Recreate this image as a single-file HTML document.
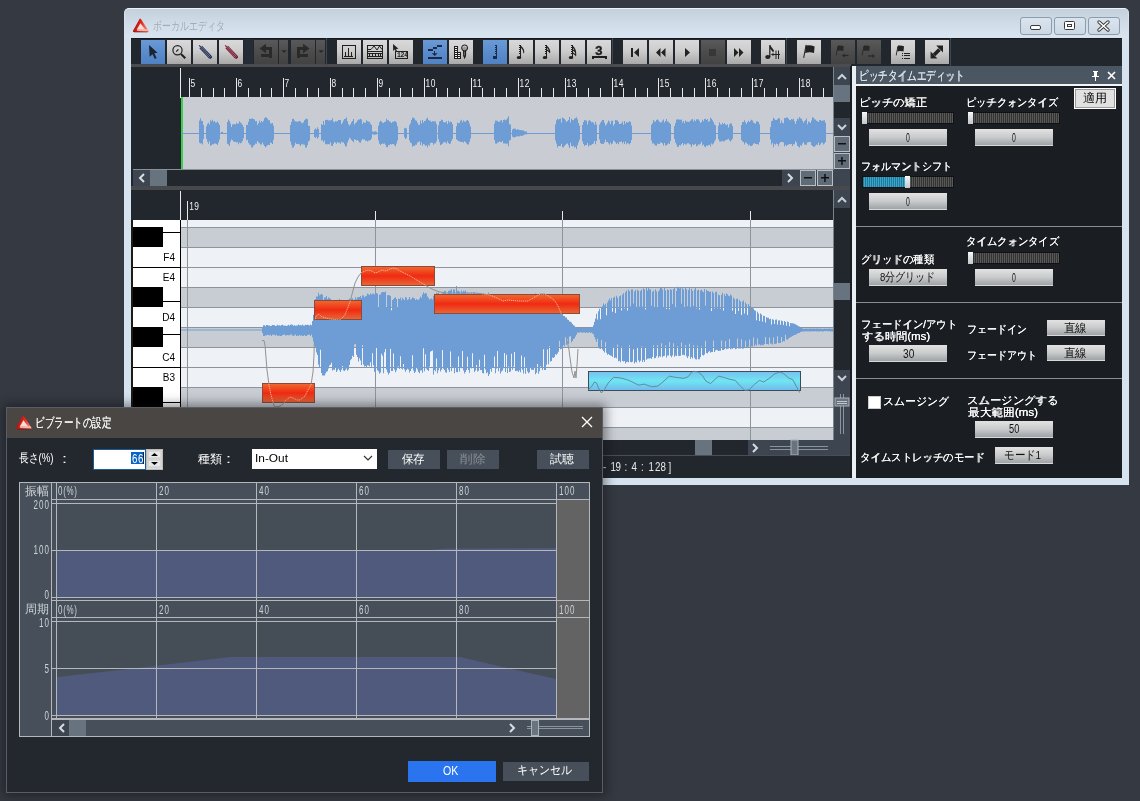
<!DOCTYPE html><html><head><meta charset="utf-8"><style>
html,body{margin:0;padding:0}
body{width:1140px;height:801px;overflow:hidden;background:#353a42;position:relative;font-family:"Liberation Sans",sans-serif}
.a{position:absolute;box-sizing:border-box}
.t{white-space:nowrap;line-height:1}
.sh{text-shadow:0.25px 0 0 currentColor}
.gb{background:linear-gradient(#d9d9d9,#cdcdcd 45%,#a9a9a9)}
.bb{background:linear-gradient(#6a9ad6,#5b8ccc 50%,#4f82c4)}
.db{background:linear-gradient(#59595a,#4d4c4c 50%,#434242)}
.pbtn{background:linear-gradient(#e2e2e2,#c9cbcc 50%,#9fa3a6);border-bottom:1px solid #d8d8d8}
.sld{background:repeating-linear-gradient(90deg,#333 0 1px,#585858 1px 2px);border:1px solid #111}
.dbtn{background:#47505a}
</style></head><body><div style="position:absolute;left:0;top:0;width:1140px;height:801px;will-change:transform"><div class="a " style="left:124px;top:8px;width:1005px;height:477px;background:#d6e2ee;border-radius:5px 5px 0 0;border-top:1px solid #eef3f8"></div>
<div class="a " style="left:125px;top:9px;width:1003px;height:29px;background:linear-gradient(#c4d0dc,#d2dee9 60%,#d8e4ef);border-radius:4px 4px 0 0"></div>
<div class="a t" style="left:153.00px;top:20.00px;font-size:12px;color:#a3abb3;font-family:'Liberation Sans',sans-serif;transform-origin:0 0;transform:scaleX(0.7447)">ボーカルエディタ</div>
<svg class="a" style="left:133px;top:18px" width="19" height="17" viewBox="0 0 19 17"><defs><linearGradient id="lga" x1="0" y1="0" x2="1" y2="0.3"><stop offset="0" stop-color="#8a0c10"/><stop offset="0.55" stop-color="#e02418"/><stop offset="1" stop-color="#f07060"/></linearGradient></defs><path d="M7.2 1.4 L14.8 13.2 L0.6 13.2 Z" fill="url(#lga)" stroke="url(#lga)" stroke-width="1.6" stroke-linejoin="round"/><path d="M7.4 5.2 L12.2 11.4 L3.8 11.4 Z" fill="#f6dcd4"/><path d="M3.6 11.2 L14.6 11.2 L15.2 13 L4.4 13 Z" fill="#f4c8bc" opacity="0.85"/><path d="M1 14 L14.5 14" stroke="#6a0c0c" stroke-width="1" opacity="0.55"/></svg>
<div class="a " style="left:1020px;top:17px;width:32px;height:18px;border:1px solid #8d9cab;border-radius:3px;background:linear-gradient(#dae4ee,#cbd8e4)"></div>
<div class="a " style="left:1054px;top:17px;width:32px;height:18px;border:1px solid #8d9cab;border-radius:3px;background:linear-gradient(#dae4ee,#cbd8e4)"></div>
<div class="a " style="left:1088px;top:17px;width:32px;height:18px;border:1px solid #8d9cab;border-radius:3px;background:linear-gradient(#dae4ee,#cbd8e4)"></div>
<svg class="a" style="left:0;top:0" width="1140" height="40"><rect x="1030.5" y="25.5" width="10" height="4" rx="1.5" fill="#fff" stroke="#3a3a3a" stroke-width="1"/><rect x="1064.5" y="21.5" width="10" height="8" rx="1" fill="#fff" stroke="#3a3a3a" stroke-width="1"/><rect x="1067.5" y="24.5" width="4" height="2" fill="#fff" stroke="#3a3a3a" stroke-width="1"/><path d="M1099 22 L1108 30 M1108 22 L1099 30" stroke="#3a3a3a" stroke-width="3.4" stroke-linecap="round"/><path d="M1099 22 L1108 30 M1108 22 L1099 30" stroke="#fff" stroke-width="1.5" stroke-linecap="round"/></svg>
<div class="a " style="left:131px;top:38px;width:991px;height:28px;background:#22262d;border-top:1px solid #15181c"></div>
<div class="a " style="left:131px;top:64px;width:720px;height:3px;background:#4a4c50"></div>
<div class="a bb" style="left:141px;top:40px;width:24px;height:24px;"></div>
<div class="a gb" style="left:167px;top:40px;width:24px;height:24px;"></div>
<div class="a gb" style="left:193px;top:40px;width:24px;height:24px;"></div>
<div class="a gb" style="left:219px;top:40px;width:24px;height:24px;"></div>
<div class="a db" style="left:254px;top:40px;width:24px;height:24px;"></div>
<div class="a db" style="left:279px;top:40px;width:9px;height:24px;"></div>
<div class="a db" style="left:291px;top:40px;width:24px;height:24px;"></div>
<div class="a db" style="left:316px;top:40px;width:9px;height:24px;"></div>
<div class="a gb" style="left:337px;top:40px;width:24px;height:24px;"></div>
<div class="a gb" style="left:363px;top:40px;width:24px;height:24px;"></div>
<div class="a gb" style="left:389px;top:40px;width:24px;height:24px;"></div>
<div class="a bb" style="left:423px;top:40px;width:24px;height:24px;"></div>
<div class="a gb" style="left:449px;top:40px;width:24px;height:24px;"></div>
<div class="a bb" style="left:483px;top:40px;width:24px;height:24px;"></div>
<div class="a gb" style="left:509px;top:40px;width:24px;height:24px;"></div>
<div class="a gb" style="left:535px;top:40px;width:24px;height:24px;"></div>
<div class="a gb" style="left:561px;top:40px;width:24px;height:24px;"></div>
<div class="a gb" style="left:587px;top:40px;width:24px;height:24px;"></div>
<div class="a gb" style="left:623px;top:40px;width:24px;height:24px;"></div>
<div class="a gb" style="left:649px;top:40px;width:24px;height:24px;"></div>
<div class="a gb" style="left:675px;top:40px;width:24px;height:24px;"></div>
<div class="a db" style="left:701px;top:40px;width:24px;height:24px;"></div>
<div class="a gb" style="left:727px;top:40px;width:24px;height:24px;"></div>
<div class="a gb" style="left:761px;top:40px;width:24px;height:24px;"></div>
<div class="a gb" style="left:797px;top:40px;width:24px;height:24px;"></div>
<div class="a db" style="left:831px;top:40px;width:24px;height:24px;"></div>
<div class="a db" style="left:857px;top:40px;width:24px;height:24px;"></div>
<div class="a gb" style="left:891px;top:40px;width:24px;height:24px;"></div>
<div class="a gb" style="left:925px;top:40px;width:24px;height:24px;"></div>
<div class="a " style="left:244px;top:39px;width:9px;height:25px;background:#252c36"></div>
<div class="a " style="left:326px;top:38px;width:1px;height:28px;background:#3e4650"></div>
<div class="a " style="left:612px;top:38px;width:1px;height:28px;background:#3e4650"></div>
<div class="a " style="left:786px;top:38px;width:1px;height:28px;background:#3e4650"></div>
<div class="a " style="left:950px;top:38px;width:1px;height:28px;background:#3e4650"></div>

<svg class="a" style="left:0;top:0" width="1140" height="70">
<path d="M149 45 L157.5 52.8 L154.3 53.2 L156.6 58 L154.8 58.9 L152.6 54.2 L149.6 56.8 Z" fill="#1b2431"/>
<circle cx="177.5" cy="50.3" r="4.6" fill="none" stroke="#202020" stroke-width="1.2"/>
<path d="M176.2 51.6 L178.4 49.4" stroke="#202020" stroke-width="1.3"/>
<path d="M181 54 L185.3 58.3" stroke="#202020" stroke-width="2"/>
<path d="M199.76 47.80 L209.66 58.50" stroke="#1f2d55" stroke-width="1.05"/><path d="M199.20 45.40 L210.60 57.60" stroke="#1f2d55" stroke-width="1.05"/><path d="M201.64 46.00 L211.54 56.70" stroke="#1f2d55" stroke-width="1.05"/><path d="M209.80 58.40 L211.80 56.60" stroke="#1f2d55" stroke-width="1.6"/>

<path d="M225.76 47.80 L235.66 58.50" stroke="#7a1430" stroke-width="1.05"/><path d="M225.20 45.40 L236.60 57.60" stroke="#7a1430" stroke-width="1.05"/><path d="M227.64 46.00 L237.54 56.70" stroke="#7a1430" stroke-width="1.05"/><path d="M235.80 58.40 L237.80 56.60" stroke="#7a1430" stroke-width="1.6"/>

<g fill="#2a2a2a" shape-rendering="crispEdges">
<rect x="265" y="47" width="7" height="3"/><rect x="269" y="47" width="3" height="11"/><rect x="261" y="54" width="11" height="3"/>
<rect x="297" y="47" width="7" height="3"/><rect x="297" y="47" width="3" height="11"/><rect x="297" y="54" width="11" height="3"/>
</g>
<g fill="#2a2a2a">
<path d="M259.5 48.5 L266 43.8 L266 53.2 Z"/>
<path d="M309.5 48.5 L303 43.8 L303 53.2 Z"/>
<path d="M281.3 50.3 L287 50.3 L284.1 53 Z"/>
<path d="M318.3 50.3 L324 50.3 L321.1 53 Z"/>
</g>
<g fill="#1e1e1e" shape-rendering="crispEdges">
<rect x="342" y="45" width="14" height="1"/><rect x="342" y="58" width="14" height="1"/><rect x="342" y="45" width="1" height="14"/><rect x="355" y="45" width="1" height="14"/>
<rect x="344" y="56" width="9" height="1"/><rect x="345" y="52" width="1" height="4"/><rect x="348" y="48" width="1" height="8"/><rect x="351" y="52" width="1" height="4"/>
<rect x="367" y="45" width="16" height="1"/><rect x="367" y="58" width="16" height="1"/><rect x="367" y="45" width="1" height="14"/><rect x="382" y="45" width="1" height="14"/>
<rect x="367" y="51" width="16" height="1"/>
<rect x="368" y="53" width="14" height="1"/><rect x="368" y="56" width="14" height="1"/>
<rect x="369" y="53" width="1" height="4"/><rect x="372" y="53" width="1" height="4"/><rect x="375" y="53" width="1" height="4"/><rect x="378" y="53" width="1" height="4"/><rect x="380" y="53" width="1" height="4"/>
<rect x="395" y="51" width="13" height="1"/><rect x="395" y="58" width="13" height="1"/><rect x="395" y="51" width="1" height="8"/><rect x="407" y="51" width="1" height="8"/>
</g>
<path d="M368 49.5 L371 49.5 L374 46 L377 50 L379.5 46 L382 49.5" fill="none" stroke="#1e1e1e" stroke-width="1"/>
<path d="M393 44 L398.5 48.8 L396 49 L397 51 L395.8 51.5 L394.8 49.5 L393.2 51 Z" fill="#222"/>
<text x="397" y="57.3" font-size="6.5" font-weight="bold" font-family="Liberation Mono" fill="#1e1e1e" letter-spacing="-0.3">124</text>
<g fill="#1a2a48" shape-rendering="crispEdges">
<rect x="428" y="49" width="5" height="2"/><rect x="433" y="47" width="4" height="2"/><rect x="437" y="45" width="5" height="2"/>
<rect x="434" y="51" width="1" height="3"/><rect x="428" y="57" width="14" height="2"/>
</g>
<path d="M431.8 53.2 L437.6 53.2 L434.7 56 Z" fill="#1a2a48"/>
<g fill="#1e1e1e" shape-rendering="crispEdges"><rect x="454" y="46" width="1" height="13"/><rect x="457" y="46" width="1" height="13"/><rect x="454" y="46" width="4" height="1"/><rect x="454" y="48" width="4" height="1"/><rect x="454" y="50" width="4" height="1"/><rect x="454" y="52" width="4" height="1"/><rect x="454" y="54" width="4" height="1"/><rect x="454" y="56" width="4" height="1"/><rect x="454" y="58" width="4" height="1"/><rect x="460" y="52" width="1" height="7"/><rect x="457" y="52" width="4" height="1"/><rect x="457" y="54" width="4" height="1"/><rect x="457" y="56" width="4" height="1"/><rect x="457" y="58" width="4" height="1"/><rect x="454" y="58" width="7" height="1"/></g><g fill="#f4f4f4" shape-rendering="crispEdges"><rect x="455" y="47" width="2" height="1"/><rect x="455" y="49" width="2" height="1"/><rect x="455" y="51" width="2" height="1"/><rect x="455" y="53" width="2" height="1"/><rect x="455" y="55" width="2" height="1"/><rect x="455" y="57" width="2" height="1"/><rect x="458" y="53" width="2" height="1"/><rect x="458" y="55" width="2" height="1"/><rect x="458" y="57" width="2" height="1"/></g><circle cx="464.6" cy="47.9" r="3" fill="#9a9a9a" stroke="#1e1e1e" stroke-width="1"/><path d="M462.6 47 Q464.6 45.6 466.6 47" stroke="#d8d8d8" stroke-width="0.8" fill="none"/><path d="M463 50.8 L466.2 50.8 L466 56 L464.6 59.2 L463.2 56 Z" fill="#1e1e1e"/><rect x="464.2" y="51.5" width="0.8" height="4" fill="#777"/>
<g fill="#1a2a48" shape-rendering="crispEdges">
<rect x="495" y="45" width="1" height="1"/><rect x="495" y="47" width="1" height="1"/><rect x="495" y="49" width="1" height="1"/><rect x="495" y="51" width="1" height="1"/><rect x="495" y="53" width="1" height="1"/>
<rect x="496" y="45" width="1" height="13"/>
<rect x="493" y="56" width="4" height="3"/>
</g>
<g fill="#1e1e1e" shape-rendering="crispEdges">
<rect x="519" y="45" width="1" height="1"/><rect x="519" y="47" width="1" height="1"/><rect x="519" y="49" width="1" height="1"/><rect x="519" y="51" width="1" height="1"/><rect x="519" y="53" width="1" height="1"/><rect x="520" y="45" width="1" height="13"/>
<rect x="545" y="45" width="1" height="1"/><rect x="545" y="47" width="1" height="1"/><rect x="545" y="49" width="1" height="1"/><rect x="545" y="51" width="1" height="1"/><rect x="545" y="53" width="1" height="1"/><rect x="546" y="45" width="1" height="13"/>
<rect x="571" y="45" width="1" height="1"/><rect x="571" y="47" width="1" height="1"/><rect x="571" y="49" width="1" height="1"/><rect x="571" y="51" width="1" height="1"/><rect x="571" y="53" width="1" height="1"/><rect x="572" y="45" width="1" height="13"/>
</g>
<g fill="#1e1e1e">
<ellipse cx="519" cy="57.5" rx="2.3" ry="1.6"/><path d="M520.5 45.5 Q524.5 48.5 524.3 52.5 L523.3 53.5 Q523.5 49.5 520.5 47.5 Z"/>
<ellipse cx="545" cy="57.5" rx="2.3" ry="1.6"/><path d="M546.5 45.5 Q550.5 48.5 550.3 52.5 L549.3 53.5 Q549.5 49.5 546.5 47.5 Z M546.5 49 L550 51.5 L549.5 52.5 L546.5 50.5 Z"/>
<ellipse cx="571" cy="57.5" rx="2.3" ry="1.6"/><path d="M572.5 45.5 Q576.5 48.5 576.3 55.5 L575.3 56.5 Q575.5 50 572.5 47.5 Z M572.5 49 L576 51.5 L575.5 52.5 L572.5 50.5 Z M572.5 52 L576 54.5 L575.5 55.5 L572.5 53.5 Z"/>
</g>
<text x="598.8" y="54.6" text-anchor="middle" font-size="13" font-weight="bold" font-family="Liberation Sans" fill="#1e1e1e" stroke="#1e1e1e" stroke-width="0.4">3</text>
<g fill="#1e1e1e" shape-rendering="crispEdges"><rect x="592" y="56" width="15" height="2"/><rect x="592" y="56" width="2" height="3"/><rect x="605" y="56" width="2" height="3"/></g>
<g fill="#222">
<rect x="631" y="48" width="2" height="9"/><path d="M639 48 L634 52.5 L639 57 Z"/>
<path d="M660.5 48 L656 52.5 L660.5 57 Z M665.5 48 L661 52.5 L665.5 57 Z"/>
<path d="M685 48 L690 52.5 L685 57 Z"/>
<rect x="709" y="49" width="7" height="7" fill="#383636"/>
<path d="M734 48 L738.5 52.5 L734 57 Z M739 48 L743.5 52.5 L739 57 Z"/>
<ellipse cx="767.8" cy="57" rx="2.6" ry="1.9"/><rect x="769.2" y="45" width="1.2" height="12"/><path d="M770 45 L774 50.5 L773.2 52.5 L770 48.5 Z"/>
</g>
<path d="M771.5 54.5 L780 54.5 M776 50.5 L776 59 M778.5 50.5 L778.5 59" stroke="#222" stroke-width="1"/>
<path d="M771.2 54.5 L773.5 52.8 L773.5 56.2 Z" fill="#222"/>
<path d="M805.6 44.8 L806.6 45 L804.2 58 L803.2 57.8 Z" fill="#222"/>
<path d="M806 45.6 Q810 44.5 814.6 46.5 L814 53 Q810 51.3 805 53 Z" fill="#222"/>
<g fill="#2a2726">
<path d="M837.4 46.2 L838.2 46.4 L836.6 55.5 L835.8 55.3 Z"/><path d="M838 45.6 Q841 45 843.8 46.2 L843.2 51 Q840.5 50 837.2 51 Z"/>
<path d="M842.5 55.5 L848.5 55.5" stroke="#2a2726" stroke-width="1.3"/><path d="M842 55.5 L844.5 53.5 L844.5 57.5 Z"/>
<path d="M863.4 46.2 L864.2 46.4 L862.6 55.5 L861.8 55.3 Z"/><path d="M864 45.6 Q867 45 869.8 46.2 L869.2 51 Q866.5 50 863.2 51 Z"/>
<path d="M868 56 L874 56" stroke="#2a2726" stroke-width="1.3"/><path d="M875 56 L872.5 54 L872.5 58 Z"/>
</g>
<g fill="#222">
<path d="M897.4 46.2 L898.2 46.4 L896.6 55.5 L895.8 55.3 Z"/><path d="M898 45.6 Q901 45 904 46.2 L903.5 51.5 Q900.5 50.5 897.2 51.5 Z"/>
</g>
<g fill="#222" shape-rendering="crispEdges">
<rect x="902" y="53" width="1" height="1"/><rect x="904" y="53" width="6" height="1"/>
<rect x="902" y="55" width="1" height="1"/><rect x="904" y="55" width="6" height="1"/>
<rect x="902" y="58" width="1" height="1"/><rect x="904" y="58" width="6" height="1"/>
</g>
<path d="M934 55 L939.5 49.5" stroke="#222" stroke-width="3.8"/>
<path d="M943 45.6 L943 52.4 L936.2 45.6 Z M930.6 58.4 L930.6 51.6 L937.4 58.4 Z" fill="#222"/>
</svg>

<div class="a " style="left:131px;top:67px;width:720px;height:119px;background:#22262d"></div>
<svg class="a" style="left:0;top:0" width="860" height="100"><rect x="189" y="78" width="1" height="19" fill="#e8e8e8"/><text x="238.25" y="87.2" font-size="10.5" fill="#f0f0f0" font-family="Liberation Sans" transform="scale(0.8,1)" letter-spacing="0.6">5</text><rect x="201" y="88" width="1" height="9" fill="#e8e8e8"/><rect x="213" y="88" width="1" height="9" fill="#e8e8e8"/><rect x="224" y="88" width="1" height="9" fill="#e8e8e8"/><rect x="236" y="78" width="1" height="19" fill="#e8e8e8"/><text x="297.00" y="87.2" font-size="10.5" fill="#f0f0f0" font-family="Liberation Sans" transform="scale(0.8,1)" letter-spacing="0.6">6</text><rect x="248" y="88" width="1" height="9" fill="#e8e8e8"/><rect x="260" y="88" width="1" height="9" fill="#e8e8e8"/><rect x="271" y="88" width="1" height="9" fill="#e8e8e8"/><rect x="283" y="78" width="1" height="19" fill="#e8e8e8"/><text x="355.75" y="87.2" font-size="10.5" fill="#f0f0f0" font-family="Liberation Sans" transform="scale(0.8,1)" letter-spacing="0.6">7</text><rect x="295" y="88" width="1" height="9" fill="#e8e8e8"/><rect x="307" y="88" width="1" height="9" fill="#e8e8e8"/><rect x="318" y="88" width="1" height="9" fill="#e8e8e8"/><rect x="330" y="78" width="1" height="19" fill="#e8e8e8"/><text x="414.50" y="87.2" font-size="10.5" fill="#f0f0f0" font-family="Liberation Sans" transform="scale(0.8,1)" letter-spacing="0.6">8</text><rect x="342" y="88" width="1" height="9" fill="#e8e8e8"/><rect x="353" y="88" width="1" height="9" fill="#e8e8e8"/><rect x="365" y="88" width="1" height="9" fill="#e8e8e8"/><rect x="377" y="78" width="1" height="19" fill="#e8e8e8"/><text x="473.25" y="87.2" font-size="10.5" fill="#f0f0f0" font-family="Liberation Sans" transform="scale(0.8,1)" letter-spacing="0.6">9</text><rect x="389" y="88" width="1" height="9" fill="#e8e8e8"/><rect x="400" y="88" width="1" height="9" fill="#e8e8e8"/><rect x="412" y="88" width="1" height="9" fill="#e8e8e8"/><rect x="424" y="78" width="1" height="19" fill="#e8e8e8"/><text x="532.00" y="87.2" font-size="10.5" fill="#f0f0f0" font-family="Liberation Sans" transform="scale(0.8,1)" letter-spacing="0.6">10</text><rect x="436" y="88" width="1" height="9" fill="#e8e8e8"/><rect x="447" y="88" width="1" height="9" fill="#e8e8e8"/><rect x="459" y="88" width="1" height="9" fill="#e8e8e8"/><rect x="471" y="78" width="1" height="19" fill="#e8e8e8"/><text x="590.75" y="87.2" font-size="10.5" fill="#f0f0f0" font-family="Liberation Sans" transform="scale(0.8,1)" letter-spacing="0.6">11</text><rect x="482" y="88" width="1" height="9" fill="#e8e8e8"/><rect x="494" y="88" width="1" height="9" fill="#e8e8e8"/><rect x="506" y="88" width="1" height="9" fill="#e8e8e8"/><rect x="518" y="78" width="1" height="19" fill="#e8e8e8"/><text x="649.50" y="87.2" font-size="10.5" fill="#f0f0f0" font-family="Liberation Sans" transform="scale(0.8,1)" letter-spacing="0.6">12</text><rect x="529" y="88" width="1" height="9" fill="#e8e8e8"/><rect x="541" y="88" width="1" height="9" fill="#e8e8e8"/><rect x="553" y="88" width="1" height="9" fill="#e8e8e8"/><rect x="565" y="78" width="1" height="19" fill="#e8e8e8"/><text x="708.25" y="87.2" font-size="10.5" fill="#f0f0f0" font-family="Liberation Sans" transform="scale(0.8,1)" letter-spacing="0.6">13</text><rect x="576" y="88" width="1" height="9" fill="#e8e8e8"/><rect x="588" y="88" width="1" height="9" fill="#e8e8e8"/><rect x="600" y="88" width="1" height="9" fill="#e8e8e8"/><rect x="612" y="78" width="1" height="19" fill="#e8e8e8"/><text x="767.00" y="87.2" font-size="10.5" fill="#f0f0f0" font-family="Liberation Sans" transform="scale(0.8,1)" letter-spacing="0.6">14</text><rect x="623" y="88" width="1" height="9" fill="#e8e8e8"/><rect x="635" y="88" width="1" height="9" fill="#e8e8e8"/><rect x="647" y="88" width="1" height="9" fill="#e8e8e8"/><rect x="658" y="78" width="1" height="19" fill="#e8e8e8"/><text x="824.50" y="87.2" font-size="10.5" fill="#f0f0f0" font-family="Liberation Sans" transform="scale(0.8,1)" letter-spacing="0.6">15</text><rect x="670" y="88" width="1" height="9" fill="#e8e8e8"/><rect x="682" y="88" width="1" height="9" fill="#e8e8e8"/><rect x="694" y="88" width="1" height="9" fill="#e8e8e8"/><rect x="705" y="78" width="1" height="19" fill="#e8e8e8"/><text x="883.25" y="87.2" font-size="10.5" fill="#f0f0f0" font-family="Liberation Sans" transform="scale(0.8,1)" letter-spacing="0.6">16</text><rect x="717" y="88" width="1" height="9" fill="#e8e8e8"/><rect x="729" y="88" width="1" height="9" fill="#e8e8e8"/><rect x="741" y="88" width="1" height="9" fill="#e8e8e8"/><rect x="752" y="78" width="1" height="19" fill="#e8e8e8"/><text x="942.00" y="87.2" font-size="10.5" fill="#f0f0f0" font-family="Liberation Sans" transform="scale(0.8,1)" letter-spacing="0.6">17</text><rect x="764" y="88" width="1" height="9" fill="#e8e8e8"/><rect x="776" y="88" width="1" height="9" fill="#e8e8e8"/><rect x="787" y="88" width="1" height="9" fill="#e8e8e8"/><rect x="799" y="78" width="1" height="19" fill="#e8e8e8"/><text x="1000.75" y="87.2" font-size="10.5" fill="#f0f0f0" font-family="Liberation Sans" transform="scale(0.8,1)" letter-spacing="0.6">18</text><rect x="811" y="88" width="1" height="9" fill="#e8e8e8"/><rect x="823" y="88" width="1" height="9" fill="#e8e8e8"/><rect x="180" y="68" width="1" height="30" fill="#e8e8e8"/></svg>
<div class="a " style="left:181px;top:97px;width:652px;height:73px;background:#c9cdd3"></div>
<div class="a " style="left:133px;top:169px;width:700px;height:1px;background:#8a9098"></div>
<div class="a " style="left:181px;top:97px;width:2px;height:72px;background:#3ad04a"></div>
<div class="a " style="left:833px;top:67px;width:1px;height:103px;background:#7a828a"></div>
<div class="a " style="left:834px;top:67px;width:16px;height:18px;background:#3d4650"></div>
<div class="a " style="left:834px;top:85px;width:16px;height:17px;background:#67737f"></div>
<div class="a " style="left:834px;top:102px;width:16px;height:16px;background:#22262d"></div>
<div class="a " style="left:834px;top:118px;width:16px;height:17px;background:#3d4650"></div>
<div class="a " style="left:834px;top:135px;width:16px;height:35px;background:#3d4650"></div>
<div class="a " style="left:834px;top:136px;width:16px;height:16px;background:#5f6c78;border:1px solid #b8bec4"></div>
<div class="a " style="left:834px;top:153px;width:16px;height:16px;background:#5f6c78;border:1px solid #b8bec4"></div>
<div class="a " style="left:133px;top:170px;width:700px;height:16px;background:#22262d"></div>
<div class="a " style="left:133px;top:170px;width:17px;height:16px;background:#3d4650"></div>
<div class="a " style="left:150px;top:170px;width:17px;height:16px;background:#67737f"></div>
<div class="a " style="left:782px;top:170px;width:68px;height:16px;background:#3d4650"></div>
<div class="a " style="left:800px;top:170px;width:16px;height:16px;background:#5f6c78;border:1px solid #b8bec4"></div>
<div class="a " style="left:817px;top:170px;width:16px;height:16px;background:#5f6c78;border:1px solid #b8bec4"></div>
<svg class="a" style="left:0;top:0" width="860" height="200"><path d="M838 79 L842 75 L846 79" fill="none" stroke="#c8d0d8" stroke-width="2"/><path d="M838 125 L842 129 L846 125" fill="none" stroke="#c8d0d8" stroke-width="2"/><rect x="838" y="143" width="8" height="1.5" fill="#111"/><rect x="838" y="160" width="8" height="1.5" fill="#111"/><rect x="841.2" y="157" width="1.5" height="8" fill="#111"/><rect x="804" y="177" width="8" height="1.5" fill="#111"/><rect x="821" y="177" width="8" height="1.5" fill="#111"/><rect x="824.2" y="174" width="1.5" height="8" fill="#111"/><path d="M144 174 L140 178 L144 182" fill="none" stroke="#d8dde2" stroke-width="2"/><path d="M788 174 L792 178 L788 182" fill="none" stroke="#d8dde2" stroke-width="2"/></svg>
<div class="a " style="left:131px;top:186px;width:720px;height:4px;background:#47494c"></div>
<svg class="a" style="left:0;top:0" width="860" height="200"><path fill="#6e9dd6" d="M181 133h652v1h-652zM199 120.6h1V142.8h-1zM200 118.3h1V143.4h-1zM201 120.7h1V143.2h-1zM202 120.9h1V144.5h-1zM203 125.1h1V139.1h-1zM206 126.3h1V138.8h-1zM207 123.8h1V141.8h-1zM208 122.8h1V143.8h-1zM209 124.5h1V141.3h-1zM210 120.2h1V145.9h-1zM211 121.3h1V145.0h-1zM212 119.8h1V144.2h-1zM213 121.8h1V144.3h-1zM214 120.9h1V143.5h-1zM215 122.5h1V143.6h-1zM216 122.4h1V144.1h-1zM217 121.6h1V145.1h-1zM218 123.1h1V142.6h-1zM219 125.0h1V139.5h-1zM221 131.9h1V133.5h-1zM222 131.8h1V133.6h-1zM227 122.0h1V143.8h-1zM228 119.5h1V144.4h-1zM229 121.1h1V145.9h-1zM230 123.4h1V141.8h-1zM231 127.1h1V139.6h-1zM232 124.4h1V140.3h-1zM233 124.0h1V141.4h-1zM234 124.2h1V142.0h-1zM235 124.5h1V141.8h-1zM236 122.7h1V142.8h-1zM237 123.8h1V142.1h-1zM238 123.4h1V144.3h-1zM239 121.3h1V142.6h-1zM240 122.6h1V143.3h-1zM241 123.5h1V142.8h-1zM242 124.7h1V140.9h-1zM243 126.9h1V138.3h-1zM246 124.8h1V140.2h-1zM247 125.0h1V139.8h-1zM248 121.7h1V143.0h-1zM249 118.7h1V144.6h-1zM250 119.1h1V144.8h-1zM251 118.6h1V147.5h-1zM252 118.5h1V147.5h-1zM253 118.9h1V145.5h-1zM254 119.6h1V145.3h-1zM255 121.2h1V143.6h-1zM256 121.1h1V143.7h-1zM257 124.7h1V141.1h-1zM258 123.3h1V142.2h-1zM259 120.6h1V143.2h-1zM260 122.6h1V144.4h-1zM261 121.0h1V144.5h-1zM262 122.2h1V142.4h-1zM263 120.8h1V144.6h-1zM264 118.3h1V146.0h-1zM265 117.2h1V147.4h-1zM266 117.6h1V146.2h-1zM267 118.8h1V145.3h-1zM268 120.2h1V144.7h-1zM269 120.3h1V144.9h-1zM270 123.3h1V142.6h-1zM271 123.5h1V142.9h-1zM272 123.1h1V144.0h-1zM273 125.7h1V139.8h-1zM290 124.9h1V141.4h-1zM291 122.0h1V144.8h-1zM292 119.1h1V147.7h-1zM293 118.8h1V147.4h-1zM294 120.6h1V145.5h-1zM295 121.5h1V142.8h-1zM296 121.6h1V144.0h-1zM297 121.7h1V144.0h-1zM298 121.3h1V143.7h-1zM299 121.1h1V144.5h-1zM300 121.4h1V146.1h-1zM301 122.7h1V144.3h-1zM302 123.2h1V144.3h-1zM303 122.2h1V144.6h-1zM304 120.2h1V144.8h-1zM305 119.2h1V147.5h-1zM306 118.6h1V147.5h-1zM307 119.2h1V145.1h-1zM308 125.7h1V141.6h-1zM309 126.0h1V140.4h-1zM314 129.4h1V136.9h-1zM315 128.4h1V138.1h-1zM316 129.4h1V136.7h-1zM317 127.3h1V138.8h-1zM318 129.1h1V137.3h-1zM321 123.9h1V140.4h-1zM322 125.1h1V140.2h-1zM323 120.9h1V142.3h-1zM324 124.7h1V140.6h-1zM325 119.9h1V144.3h-1zM326 120.0h1V144.2h-1zM327 119.8h1V144.3h-1zM328 120.4h1V144.0h-1zM329 120.3h1V144.5h-1zM330 120.6h1V142.3h-1zM331 120.1h1V145.8h-1zM332 118.2h1V145.9h-1zM333 121.6h1V143.7h-1zM334 122.3h1V142.1h-1zM335 120.9h1V142.8h-1zM336 121.5h1V143.8h-1zM337 120.9h1V142.0h-1zM338 120.0h1V142.8h-1zM339 120.1h1V142.8h-1zM340 120.1h1V143.8h-1zM341 124.3h1V141.8h-1zM342 122.7h1V142.5h-1zM343 120.4h1V142.3h-1zM344 119.1h1V144.3h-1zM345 118.7h1V146.4h-1zM346 117.4h1V146.2h-1zM347 121.3h1V142.7h-1zM348 124.3h1V140.3h-1zM349 125.5h1V137.8h-1zM350 124.2h1V138.7h-1zM351 122.3h1V140.0h-1zM352 121.1h1V141.1h-1zM353 118.9h1V142.2h-1zM354 124.6h1V139.2h-1zM355 123.0h1V139.7h-1zM356 122.2h1V140.4h-1zM357 120.6h1V140.0h-1zM358 119.6h1V141.0h-1zM359 119.6h1V142.4h-1zM360 118.7h1V142.8h-1zM361 119.4h1V140.6h-1zM362 124.1h1V138.9h-1zM363 122.0h1V139.4h-1zM364 122.8h1V139.5h-1zM365 122.7h1V140.8h-1zM366 120.3h1V140.8h-1zM367 121.3h1V141.5h-1zM368 121.8h1V140.5h-1zM369 121.7h1V140.8h-1zM370 123.7h1V140.0h-1zM371 125.0h1V138.4h-1zM372 131.5h1V134.3h-1zM373 131.8h1V134.5h-1zM374 131.4h1V134.9h-1zM375 131.3h1V134.6h-1zM376 131.7h1V134.2h-1zM378 125.7h1V140.6h-1zM379 122.2h1V143.8h-1zM380 120.7h1V145.1h-1zM381 121.4h1V143.9h-1zM382 122.5h1V143.6h-1zM383 123.0h1V143.8h-1zM384 122.0h1V143.5h-1zM385 121.7h1V144.7h-1zM386 118.8h1V146.9h-1zM387 120.3h1V147.3h-1zM388 120.3h1V145.1h-1zM389 121.5h1V145.3h-1zM390 121.7h1V144.1h-1zM391 122.9h1V144.4h-1zM392 121.8h1V144.0h-1zM393 122.0h1V144.0h-1zM394 120.9h1V145.3h-1zM395 121.2h1V146.2h-1zM396 122.5h1V143.5h-1zM397 126.3h1V140.4h-1zM404 128.3h1V137.3h-1zM405 127.8h1V139.1h-1zM406 128.4h1V138.2h-1zM409 125.3h1V140.4h-1zM410 123.3h1V142.8h-1zM411 120.0h1V143.2h-1zM412 117.7h1V146.8h-1zM413 117.7h1V145.8h-1zM414 118.4h1V146.0h-1zM415 120.2h1V144.8h-1zM416 120.8h1V144.8h-1zM417 122.8h1V142.4h-1zM418 124.8h1V141.9h-1zM419 124.7h1V141.2h-1zM420 120.5h1V145.0h-1zM421 123.5h1V142.4h-1zM422 120.0h1V145.7h-1zM423 122.5h1V144.0h-1zM424 120.9h1V144.6h-1zM425 120.8h1V146.0h-1zM426 118.8h1V145.2h-1zM427 117.8h1V147.5h-1zM428 119.9h1V144.8h-1zM429 120.7h1V145.8h-1zM430 120.7h1V142.8h-1zM431 121.9h1V142.8h-1zM432 121.3h1V142.8h-1zM433 121.3h1V144.8h-1zM434 121.4h1V143.6h-1zM435 121.3h1V143.2h-1zM436 124.0h1V141.6h-1zM438 125.3h1V139.2h-1zM439 121.6h1V142.3h-1zM440 121.1h1V145.2h-1zM441 119.6h1V144.5h-1zM442 119.9h1V143.8h-1zM443 122.0h1V142.6h-1zM444 122.6h1V141.9h-1zM445 122.2h1V142.6h-1zM446 121.2h1V143.6h-1zM447 124.1h1V141.3h-1zM448 120.7h1V143.0h-1zM449 122.4h1V144.1h-1zM450 121.6h1V143.5h-1zM451 122.0h1V141.0h-1zM452 124.3h1V138.9h-1zM456 126.2h1V139.6h-1zM457 122.5h1V140.1h-1zM458 123.2h1V141.2h-1zM459 123.0h1V141.2h-1zM460 120.7h1V142.0h-1zM461 119.8h1V142.1h-1zM462 122.2h1V141.8h-1zM463 120.5h1V142.8h-1zM464 121.5h1V141.3h-1zM465 121.8h1V141.9h-1zM466 120.5h1V143.6h-1zM467 120.0h1V144.6h-1zM468 120.9h1V144.6h-1zM469 123.4h1V141.9h-1zM470 126.5h1V138.5h-1zM494 123.6h1V140.1h-1zM495 120.6h1V143.6h-1zM496 120.8h1V143.8h-1zM497 120.7h1V142.6h-1zM498 122.1h1V142.5h-1zM499 121.8h1V141.4h-1zM500 120.5h1V142.1h-1zM501 120.1h1V142.2h-1zM502 122.4h1V141.0h-1zM503 120.1h1V143.5h-1zM504 119.6h1V143.4h-1zM505 120.3h1V143.6h-1zM506 119.5h1V143.8h-1zM507 118.2h1V143.6h-1zM508 116.3h1V146.2h-1zM509 124.2h1V140.4h-1zM510 124.6h1V140.1h-1zM512 129.5h1V136.8h-1zM513 128.7h1V137.3h-1zM514 128.5h1V137.4h-1zM515 128.7h1V137.0h-1zM516 130.1h1V136.4h-1zM517 129.3h1V136.2h-1zM518 129.6h1V136.5h-1zM519 129.9h1V136.3h-1zM520 129.9h1V135.8h-1zM521 130.2h1V135.9h-1zM522 130.3h1V135.8h-1zM523 130.6h1V135.3h-1zM524 131.3h1V134.7h-1zM525 131.6h1V134.3h-1zM526 131.6h1V134.4h-1zM555 124.2h1V140.6h-1zM556 120.3h1V143.6h-1zM557 118.7h1V147.6h-1zM558 119.6h1V145.9h-1zM559 119.0h1V146.1h-1zM560 118.5h1V145.9h-1zM561 122.4h1V143.8h-1zM562 117.6h1V147.3h-1zM563 118.2h1V147.4h-1zM564 119.1h1V146.0h-1zM565 120.3h1V144.7h-1zM566 122.0h1V143.7h-1zM567 120.9h1V143.5h-1zM568 120.0h1V145.4h-1zM569 117.1h1V148.1h-1zM570 122.5h1V142.7h-1zM571 118.8h1V146.1h-1zM572 119.9h1V146.5h-1zM573 120.3h1V145.8h-1zM574 118.4h1V147.5h-1zM575 118.3h1V146.8h-1zM576 117.2h1V149.0h-1zM577 119.3h1V145.3h-1zM578 123.0h1V142.5h-1zM579 125.5h1V139.8h-1zM582 124.9h1V141.2h-1zM583 122.1h1V144.0h-1zM584 119.9h1V146.0h-1zM585 120.6h1V145.1h-1zM586 120.6h1V145.0h-1zM587 124.4h1V142.9h-1zM588 121.3h1V146.4h-1zM589 119.9h1V145.1h-1zM590 121.1h1V145.6h-1zM591 122.2h1V144.8h-1zM592 122.1h1V143.9h-1zM593 122.8h1V143.6h-1zM594 124.7h1V141.1h-1zM595 121.8h1V144.3h-1zM596 124.5h1V141.1h-1zM599 124.7h1V139.6h-1zM600 122.7h1V142.9h-1zM601 121.2h1V143.9h-1zM602 120.1h1V143.8h-1zM603 120.0h1V143.9h-1zM604 122.7h1V142.6h-1zM605 125.5h1V139.8h-1zM606 124.4h1V141.9h-1zM607 122.7h1V142.1h-1zM608 120.6h1V143.2h-1zM609 121.4h1V144.7h-1zM610 124.1h1V142.5h-1zM611 120.8h1V144.3h-1zM612 120.7h1V143.5h-1zM613 125.7h1V140.7h-1zM614 124.1h1V141.2h-1zM615 120.1h1V142.5h-1zM616 120.3h1V144.1h-1zM617 120.5h1V142.8h-1zM618 122.0h1V144.3h-1zM619 124.0h1V141.7h-1zM620 123.9h1V141.9h-1zM621 123.3h1V141.4h-1zM622 121.4h1V143.5h-1zM623 124.7h1V141.7h-1zM624 121.1h1V143.9h-1zM625 123.7h1V141.4h-1zM626 121.9h1V144.2h-1zM627 122.6h1V142.9h-1zM628 122.2h1V143.5h-1zM629 121.2h1V144.5h-1zM630 121.9h1V143.0h-1zM631 125.4h1V139.9h-1zM651 124.7h1V140.5h-1zM652 123.3h1V143.6h-1zM653 120.1h1V143.3h-1zM654 121.5h1V144.6h-1zM655 121.7h1V145.5h-1zM656 119.9h1V145.8h-1zM657 119.3h1V143.5h-1zM658 120.6h1V143.9h-1zM659 121.8h1V144.0h-1zM660 122.5h1V142.3h-1zM661 122.2h1V142.7h-1zM662 120.7h1V143.4h-1zM663 119.6h1V145.5h-1zM664 122.5h1V143.1h-1zM665 120.9h1V145.4h-1zM666 119.0h1V145.2h-1zM667 121.5h1V144.4h-1zM668 121.8h1V143.3h-1zM669 123.0h1V144.1h-1zM670 124.0h1V141.0h-1zM674 126.1h1V139.0h-1zM675 123.0h1V142.5h-1zM676 119.6h1V144.5h-1zM677 119.6h1V146.9h-1zM678 119.2h1V146.8h-1zM679 119.7h1V145.1h-1zM680 119.7h1V145.4h-1zM681 119.5h1V144.3h-1zM682 122.6h1V143.0h-1zM683 120.9h1V145.3h-1zM684 123.3h1V143.7h-1zM685 120.6h1V144.4h-1zM686 121.4h1V144.5h-1zM687 121.7h1V143.3h-1zM688 122.0h1V143.2h-1zM689 121.5h1V144.2h-1zM690 120.8h1V144.8h-1zM691 119.5h1V147.0h-1zM692 119.1h1V144.3h-1zM693 121.6h1V145.0h-1zM694 119.7h1V144.4h-1zM695 121.3h1V143.8h-1zM696 119.2h1V146.2h-1zM697 119.6h1V145.8h-1zM698 119.3h1V144.2h-1zM699 120.9h1V144.8h-1zM700 122.9h1V143.8h-1zM701 122.1h1V141.8h-1zM702 119.8h1V145.5h-1zM703 121.3h1V144.6h-1zM704 118.9h1V146.6h-1zM705 118.8h1V147.2h-1zM706 120.1h1V145.4h-1zM707 119.1h1V145.9h-1zM708 121.8h1V144.9h-1zM709 121.3h1V144.8h-1zM710 117.7h1V146.5h-1zM711 118.7h1V143.6h-1zM712 120.3h1V144.4h-1zM713 122.1h1V143.6h-1zM714 124.5h1V141.4h-1zM715 125.3h1V139.7h-1zM718 125.5h1V139.2h-1zM719 122.3h1V141.5h-1zM720 124.3h1V141.4h-1zM721 124.8h1V141.4h-1zM722 123.1h1V140.8h-1zM723 124.2h1V141.6h-1zM724 123.1h1V141.2h-1zM725 124.4h1V140.3h-1zM726 124.9h1V139.8h-1zM727 124.2h1V139.4h-1zM728 127.4h1V138.8h-1zM729 124.4h1V140.6h-1zM730 123.3h1V141.6h-1zM731 123.5h1V140.3h-1zM732 125.9h1V138.8h-1zM741 125.1h1V140.1h-1zM742 122.1h1V141.6h-1zM743 121.9h1V142.0h-1zM744 120.2h1V144.5h-1zM745 122.3h1V142.4h-1zM746 123.9h1V142.8h-1zM747 122.0h1V144.0h-1zM748 120.7h1V145.4h-1zM749 122.0h1V144.8h-1zM750 120.7h1V146.0h-1zM751 119.7h1V145.9h-1zM752 120.4h1V145.3h-1zM753 122.5h1V143.7h-1zM754 123.2h1V142.9h-1zM755 123.5h1V143.9h-1zM756 121.4h1V144.2h-1zM757 121.2h1V144.0h-1zM758 121.9h1V144.7h-1zM759 124.2h1V141.9h-1zM770 127.1h1V139.6h-1zM771 121.2h1V144.6h-1zM772 120.7h1V142.7h-1zM773 117.8h1V147.3h-1zM774 118.9h1V144.1h-1zM775 120.1h1V144.7h-1zM776 119.9h1V143.4h-1zM777 119.2h1V144.0h-1zM778 118.1h1V146.2h-1zM779 118.5h1V143.4h-1zM780 123.3h1V142.1h-1zM781 120.4h1V142.1h-1zM782 122.8h1V142.0h-1zM783 123.3h1V142.4h-1zM784 118.1h1V146.5h-1zM785 118.2h1V144.7h-1zM786 117.5h1V146.1h-1zM787 117.5h1V144.9h-1zM788 118.8h1V144.5h-1zM789 119.9h1V143.9h-1zM790 120.3h1V144.3h-1zM791 119.1h1V143.9h-1zM792 119.4h1V146.1h-1zM793 118.8h1V144.3h-1zM794 121.2h1V144.3h-1zM795 123.9h1V141.2h-1zM796 121.1h1V142.5h-1zM797 118.6h1V145.8h-1zM798 119.3h1V146.7h-1zM799 117.0h1V147.6h-1zM800 118.3h1V145.1h-1zM801 118.7h1V145.9h-1zM802 120.8h1V143.6h-1zM803 122.8h1V142.2h-1zM804 121.0h1V144.4h-1zM805 120.3h1V144.8h-1zM806 118.4h1V144.8h-1zM807 124.2h1V142.6h-1zM808 121.4h1V142.2h-1zM809 121.9h1V142.0h-1zM810 123.1h1V142.0h-1zM811 120.4h1V145.0h-1zM812 117.3h1V146.1h-1zM813 117.8h1V146.7h-1zM814 119.3h1V146.8h-1zM815 119.5h1V145.8h-1zM816 120.8h1V144.6h-1zM817 121.2h1V145.0h-1zM818 122.1h1V142.6h-1zM819 120.0h1V145.3h-1zM820 119.9h1V144.5h-1zM821 120.9h1V142.7h-1zM822 120.6h1V142.8h-1zM823 120.6h1V144.6h-1zM824 120.3h1V143.6h-1zM825 122.7h1V142.1h-1z"/></svg>
<div class="a " style="left:131px;top:190px;width:720px;height:288px;background:#22262d"></div>
<svg class="a" style="left:0;top:0" width="860" height="230"><rect x="180" y="191" width="1" height="30" fill="#e8e8e8"/><rect x="187" y="201" width="1" height="20" fill="#e8e8e8"/><text x="236.5" y="210.2" font-size="10.5" fill="#f0f0f0" font-family="Liberation Sans" transform="scale(0.8,1)" letter-spacing="0.6">19</text><rect x="375" y="211" width="1" height="10" fill="#e8e8e8"/><rect x="562" y="211" width="1" height="10" fill="#e8e8e8"/><rect x="750" y="211" width="1" height="10" fill="#e8e8e8"/></svg>
<svg class="a" style="left:0;top:0" width="860" height="450"><rect x="181" y="220" width="653" height="7" fill="#eef1f5"/><rect x="181" y="227" width="653" height="20" fill="#c8cdd3"/><rect x="181" y="247" width="653" height="20" fill="#eef1f5"/><rect x="181" y="267" width="653" height="20" fill="#eef1f5"/><rect x="181" y="287" width="653" height="20" fill="#c8cdd3"/><rect x="181" y="307" width="653" height="20" fill="#eef1f5"/><rect x="181" y="327" width="653" height="20" fill="#c8cdd3"/><rect x="181" y="347" width="653" height="20" fill="#eef1f5"/><rect x="181" y="367" width="653" height="20" fill="#eef1f5"/><rect x="181" y="387" width="653" height="20" fill="#c8cdd3"/><rect x="181" y="407" width="653" height="20" fill="#eef1f5"/><rect x="181" y="427" width="653" height="13" fill="#c8cdd3"/><rect x="181" y="227" width="653" height="1" fill="#8e949a"/><rect x="181" y="247" width="653" height="1" fill="#8e949a"/><rect x="181" y="267" width="653" height="1" fill="#8e949a"/><rect x="181" y="287" width="653" height="1" fill="#8e949a"/><rect x="181" y="307" width="653" height="1" fill="#8e949a"/><rect x="181" y="327" width="653" height="1" fill="#8e949a"/><rect x="181" y="347" width="653" height="1" fill="#8e949a"/><rect x="181" y="367" width="653" height="1" fill="#8e949a"/><rect x="181" y="387" width="653" height="1" fill="#8e949a"/><rect x="181" y="407" width="653" height="1" fill="#8e949a"/><rect x="181" y="427" width="653" height="1" fill="#8e949a"/><rect x="187" y="220" width="1" height="220" fill="#8e949a"/><rect x="375" y="220" width="1" height="220" fill="#8e949a"/><rect x="562" y="220" width="1" height="220" fill="#8e949a"/><rect x="750" y="220" width="1" height="220" fill="#8e949a"/><clipPath id="nclip"><rect x="262" y="383" width="53" height="20"/><rect x="314" y="300" width="48" height="20"/><rect x="361" y="266" width="74" height="20"/><rect x="434" y="294" width="146" height="20"/><rect x="588" y="371" width="213" height="20"/></clipPath><path d="M262 340.5 L264 340.5 L265 345 L267 370 L269 385 L271 395 L273 402 L274 406 L276 407 L280 406 L283 404 L286 400 L290 397 L293 398 L297 400 L300 400 L305 396 L308 390 L311 385 L313 372 L314 355 L314.5 335 L315 320 L316 316 L319 314 L322 317 L330 319 L340 320 L345 315 L350 302 L355 283 L358 277 L361 273 L365 271 L368 270 L372 271 L375 273 L378 272 L382 270 L386 271 L390 269 L393 268 L397 269 L400 271 L404 273 L408 275 L412 277 L415 279 L420 282 L425 285 L428 287 L432 289 L437 291 L440 292 L447 293 L455 293 L465 293 L475 293 L480 293.5 L490 295 L497 298 L503 301 L508 300 L513 300.5 L520 301 L528 301 L535 297 L540 294 L545 294 L550 297 L555 301 L558 306 L561 313 L565 330 L569 350 L571 365 L572 372 L574 378 L575 371 L576 378 L577 365 L578 349" fill="none" stroke="#959290" stroke-width="1"/><path d="M588.2 389.9 L591.9 386.2 L594.5 382 L596.6 383 L598.2 387.3 L601.4 393 L604.5 389.4 L608.2 383 L613.5 377.3 L619.8 377.8 L626.1 379.4 L630.3 381 L638.7 385.2 L644 384.1 L651.4 386.7 L657.7 386.2 L664 381 L669.3 376.2 L675.6 377.3 L684 378.3 L688.2 376.7 L691.4 372.5 L693.5 371.3 L698.4 372 L702.6 375.7 L705.8 381 L710.5 383.6 L718.4 376.2 L723.7 377.3 L730 379.4 L735.3 380.4 L739.5 385.2 L744.7 390.4 L749 389.9 L754.2 384.6 L759.5 380.4 L763.7 382 L770 377.8 L774.2 374.1 L779.5 372 L783.7 373.6 L789 378.3 L792.6 379.4 L796.3 386.2 L799.5 392.5" fill="none" stroke="#6a8898" stroke-width="1"/><path fill="#6e9dd6" d="M181 329.5h1V330.5h-1zM182 329.5h1V330.5h-1zM183 329.5h1V330.5h-1zM184 329.5h1V330.5h-1zM185 329.5h1V330.5h-1zM186 329.5h1V330.5h-1zM187 329.5h1V330.5h-1zM188 329.5h1V330.5h-1zM189 329.5h1V330.5h-1zM190 329.5h1V330.5h-1zM191 329.5h1V330.5h-1zM192 329.5h1V330.5h-1zM193 329.5h1V330.5h-1zM194 329.5h1V330.5h-1zM195 329.5h1V330.5h-1zM196 329.5h1V330.5h-1zM197 329.5h1V330.5h-1zM198 329.5h1V330.5h-1zM199 329.5h1V330.5h-1zM200 329.5h1V330.5h-1zM201 329.5h1V330.5h-1zM202 329.5h1V330.5h-1zM203 329.5h1V330.5h-1zM204 329.5h1V330.5h-1zM205 329.5h1V330.5h-1zM206 329.5h1V330.5h-1zM207 329.5h1V330.5h-1zM208 329.5h1V330.5h-1zM209 329.5h1V330.5h-1zM210 329.5h1V330.5h-1zM211 329.5h1V330.5h-1zM212 329.5h1V330.5h-1zM213 329.5h1V330.5h-1zM214 329.5h1V330.5h-1zM215 329.5h1V330.5h-1zM216 329.5h1V330.5h-1zM217 329.5h1V330.5h-1zM218 329.5h1V330.5h-1zM219 329.5h1V330.5h-1zM220 329.5h1V330.5h-1zM221 329.5h1V330.5h-1zM222 329.5h1V330.5h-1zM223 329.5h1V330.5h-1zM224 329.5h1V330.5h-1zM225 329.5h1V330.5h-1zM226 329.5h1V330.5h-1zM227 329.5h1V330.5h-1zM228 329.5h1V330.5h-1zM229 329.5h1V330.5h-1zM230 329.5h1V330.5h-1zM231 329.5h1V330.5h-1zM232 329.5h1V330.5h-1zM233 329.5h1V330.5h-1zM234 329.5h1V330.5h-1zM235 329.5h1V330.5h-1zM236 329.5h1V330.5h-1zM237 329.5h1V330.5h-1zM238 329.5h1V330.5h-1zM239 329.5h1V330.5h-1zM240 329.5h1V330.5h-1zM241 329.5h1V330.5h-1zM242 329.5h1V330.5h-1zM243 329.5h1V330.5h-1zM244 329.5h1V330.5h-1zM245 329.5h1V330.5h-1zM246 329.5h1V330.5h-1zM247 329.5h1V330.5h-1zM248 329.5h1V330.5h-1zM249 329.5h1V330.5h-1zM250 329.5h1V330.5h-1zM251 329.5h1V330.5h-1zM252 329.5h1V330.5h-1zM253 329.5h1V330.5h-1zM254 329.5h1V330.5h-1zM255 329.5h1V330.5h-1zM256 329.5h1V330.5h-1zM257 329.5h1V330.5h-1zM258 329.5h1V330.5h-1zM259 329.5h1V330.5h-1zM260 329.5h1V330.5h-1zM261 329.5h1V330.5h-1zM262 327.5h1V333.0h-1zM263 325.2h1V335.9h-1zM264 325.3h1V335.9h-1zM265 326.2h1V335.2h-1zM266 325.0h1V335.5h-1zM267 325.0h1V334.7h-1zM268 325.6h1V334.9h-1zM269 325.5h1V335.4h-1zM270 326.1h1V334.8h-1zM271 325.8h1V335.9h-1zM272 325.1h1V334.7h-1zM273 325.1h1V334.7h-1zM274 325.3h1V334.7h-1zM275 326.1h1V335.8h-1zM276 325.8h1V334.8h-1zM277 324.7h1V335.8h-1zM278 325.6h1V335.9h-1zM279 325.3h1V335.5h-1zM280 325.7h1V335.9h-1zM281 325.0h1V335.9h-1zM282 324.7h1V334.9h-1zM283 325.4h1V334.7h-1zM284 325.7h1V334.6h-1zM285 325.5h1V335.4h-1zM286 325.9h1V335.5h-1zM287 325.4h1V335.0h-1zM288 324.7h1V335.2h-1zM289 325.4h1V335.2h-1zM290 324.8h1V334.6h-1zM291 324.5h1V334.5h-1zM292 324.7h1V335.8h-1zM293 325.8h1V335.7h-1zM294 325.3h1V335.4h-1zM295 325.7h1V334.6h-1zM296 325.5h1V335.9h-1zM297 325.4h1V335.6h-1zM298 324.4h1V335.9h-1zM299 325.2h1V335.0h-1zM300 324.9h1V335.7h-1zM301 325.5h1V335.6h-1zM302 324.5h1V335.8h-1zM303 325.6h1V335.9h-1zM304 325.5h1V335.0h-1zM305 324.7h1V335.9h-1zM306 325.1h1V335.9h-1zM307 324.8h1V335.0h-1zM308 325.1h1V334.8h-1zM309 325.4h1V334.7h-1zM310 324.5h1V336.0h-1zM311 325.3h1V334.6h-1zM312 321.0h1V337.6h-1zM313 314.8h1V341.5h-1zM314 304.4h1V346.0h-1zM315 298.9h1V348.1h-1zM316 296.5h1V352.4h-1zM317 296.6h1V354.9h-1zM318 292.8h1V364.4h-1zM319 295.3h1V367.1h-1zM320 294.4h1V349.8h-1zM321 294.0h1V373.1h-1zM322 294.8h1V375.6h-1zM323 305.5h1V375.5h-1zM324 297.4h1V375.5h-1zM325 297.5h1V373.4h-1zM326 296.1h1V371.7h-1zM327 298.9h1V371.3h-1zM328 297.4h1V368.5h-1zM329 298.2h1V365.6h-1zM330 298.5h1V364.7h-1zM331 300.8h1V362.7h-1zM332 309.6h1V370.4h-1zM333 308.6h1V369.5h-1zM334 301.1h1V370.1h-1zM335 300.1h1V367.5h-1zM336 310.4h1V371.9h-1zM337 299.8h1V370.4h-1zM338 300.3h1V368.8h-1zM339 298.8h1V370.3h-1zM340 300.8h1V371.9h-1zM341 308.7h1V369.7h-1zM342 301.1h1V366.1h-1zM343 301.1h1V370.4h-1zM344 301.7h1V371.0h-1zM345 310.7h1V369.8h-1zM346 300.3h1V368.6h-1zM347 299.7h1V370.8h-1zM348 300.1h1V369.4h-1zM349 298.4h1V364.9h-1zM350 300.4h1V360.3h-1zM351 298.7h1V358.9h-1zM352 298.2h1V355.7h-1zM353 300.0h1V357.1h-1zM354 299.5h1V344.4h-1zM355 297.3h1V344.1h-1zM356 299.3h1V354.8h-1zM357 297.2h1V357.1h-1zM358 296.9h1V361.4h-1zM359 296.9h1V358.3h-1zM360 296.0h1V360.5h-1zM361 297.9h1V365.1h-1zM362 295.3h1V344.9h-1zM363 295.5h1V364.5h-1zM364 297.2h1V366.4h-1zM365 296.3h1V365.9h-1zM366 295.8h1V368.0h-1zM367 293.6h1V365.3h-1zM368 294.2h1V365.5h-1zM369 295.1h1V366.2h-1zM370 293.3h1V362.3h-1zM371 294.6h1V366.7h-1zM372 293.7h1V353.3h-1zM373 293.5h1V365.2h-1zM374 294.4h1V371.7h-1zM375 292.9h1V371.3h-1zM376 293.1h1V347.2h-1zM377 293.8h1V370.3h-1zM378 307.2h1V371.3h-1zM379 294.8h1V373.7h-1zM380 294.6h1V372.4h-1zM381 292.5h1V353.8h-1zM382 292.1h1V355.7h-1zM383 292.0h1V373.2h-1zM384 292.3h1V352.2h-1zM385 291.4h1V349.0h-1zM386 307.6h1V369.4h-1zM387 295.2h1V372.3h-1zM388 295.1h1V374.4h-1zM389 295.2h1V373.1h-1zM390 296.1h1V348.8h-1zM391 310.2h1V371.0h-1zM392 299.9h1V371.1h-1zM393 298.9h1V353.5h-1zM394 297.9h1V369.5h-1zM395 297.2h1V372.2h-1zM396 298.9h1V370.5h-1zM397 307.3h1V366.8h-1zM398 298.7h1V366.4h-1zM399 299.1h1V369.0h-1zM400 297.5h1V356.3h-1zM401 300.2h1V368.6h-1zM402 297.7h1V369.4h-1zM403 299.1h1V363.9h-1zM404 300.2h1V369.5h-1zM405 297.1h1V371.8h-1zM406 297.7h1V369.9h-1zM407 300.0h1V368.8h-1zM408 299.3h1V369.4h-1zM409 297.1h1V372.5h-1zM410 299.6h1V371.0h-1zM411 299.0h1V368.8h-1zM412 297.3h1V355.2h-1zM413 297.9h1V370.6h-1zM414 298.2h1V373.0h-1zM415 300.1h1V371.7h-1zM416 298.9h1V367.9h-1zM417 299.7h1V369.5h-1zM418 299.7h1V372.1h-1zM419 298.7h1V373.2h-1zM420 296.5h1V370.6h-1zM421 297.7h1V370.3h-1zM422 294.4h1V372.8h-1zM423 292.3h1V348.2h-1zM424 293.8h1V371.2h-1zM425 293.1h1V354.3h-1zM426 293.6h1V368.7h-1zM427 296.5h1V370.1h-1zM428 297.7h1V370.9h-1zM429 299.5h1V366.6h-1zM430 298.7h1V351.7h-1zM431 298.5h1V350.9h-1zM432 299.6h1V350.4h-1zM433 295.7h1V374.4h-1zM434 296.7h1V370.0h-1zM435 297.5h1V371.3h-1zM436 292.6h1V358.4h-1zM437 293.2h1V373.2h-1zM438 292.5h1V370.3h-1zM439 294.4h1V368.0h-1zM440 294.1h1V371.6h-1zM441 293.7h1V369.7h-1zM442 293.2h1V349.9h-1zM443 292.8h1V368.7h-1zM444 290.7h1V370.0h-1zM445 291.3h1V372.2h-1zM446 300.4h1V372.8h-1zM447 303.5h1V367.6h-1zM448 290.9h1V369.7h-1zM449 290.5h1V371.9h-1zM450 290.5h1V351.6h-1zM451 289.2h1V371.3h-1zM452 305.6h1V366.8h-1zM453 289.4h1V367.4h-1zM454 289.4h1V373.2h-1zM455 299.7h1V367.5h-1zM456 286.0h1V372.0h-1zM457 291.1h1V372.2h-1zM458 290.7h1V356.5h-1zM459 291.7h1V371.6h-1zM460 299.7h1V368.1h-1zM461 290.6h1V368.2h-1zM462 292.3h1V351.1h-1zM463 290.8h1V370.4h-1zM464 291.5h1V373.6h-1zM465 290.6h1V372.0h-1zM466 293.4h1V370.1h-1zM467 292.4h1V356.8h-1zM468 294.9h1V370.1h-1zM469 293.2h1V372.8h-1zM470 295.6h1V367.6h-1zM471 292.4h1V368.4h-1zM472 295.9h1V353.3h-1zM473 292.6h1V367.6h-1zM474 292.5h1V372.0h-1zM475 294.7h1V370.5h-1zM476 293.0h1V365.1h-1zM477 294.7h1V371.5h-1zM478 293.8h1V370.7h-1zM479 295.9h1V359.8h-1zM480 296.1h1V370.0h-1zM481 303.4h1V370.1h-1zM482 296.5h1V373.0h-1zM483 293.8h1V373.6h-1zM484 295.6h1V354.7h-1zM485 294.5h1V369.6h-1zM486 295.8h1V373.3h-1zM487 303.3h1V372.3h-1zM488 292.6h1V375.9h-1zM489 296.8h1V373.9h-1zM490 296.2h1V368.9h-1zM491 294.9h1V371.8h-1zM492 295.5h1V367.6h-1zM493 295.1h1V367.8h-1zM494 294.8h1V356.6h-1zM495 295.4h1V373.3h-1zM496 297.6h1V368.4h-1zM497 296.4h1V351.1h-1zM498 295.1h1V371.3h-1zM499 296.9h1V367.1h-1zM500 295.3h1V373.4h-1zM501 294.9h1V371.4h-1zM502 296.2h1V370.4h-1zM503 297.1h1V368.2h-1zM504 295.3h1V352.9h-1zM505 297.8h1V372.0h-1zM506 295.6h1V354.8h-1zM507 296.1h1V373.1h-1zM508 297.2h1V366.5h-1zM509 297.6h1V372.0h-1zM510 295.3h1V371.4h-1zM511 295.5h1V353.8h-1zM512 295.6h1V369.8h-1zM513 296.9h1V366.5h-1zM514 296.8h1V352.0h-1zM515 297.6h1V371.1h-1zM516 307.3h1V371.0h-1zM517 296.9h1V370.8h-1zM518 295.0h1V372.1h-1zM519 296.5h1V370.2h-1zM520 308.8h1V372.2h-1zM521 295.3h1V355.6h-1zM522 295.7h1V369.8h-1zM523 296.2h1V373.4h-1zM524 296.4h1V357.3h-1zM525 295.3h1V373.7h-1zM526 297.6h1V367.2h-1zM527 294.8h1V371.4h-1zM528 294.5h1V373.3h-1zM529 296.3h1V372.2h-1zM530 296.9h1V368.1h-1zM531 296.3h1V369.8h-1zM532 296.5h1V369.7h-1zM533 297.3h1V369.9h-1zM534 295.2h1V366.9h-1zM535 293.6h1V374.3h-1zM536 295.6h1V372.8h-1zM537 297.2h1V364.1h-1zM538 296.9h1V373.8h-1zM539 297.1h1V371.3h-1zM540 295.3h1V366.3h-1zM541 297.5h1V367.4h-1zM542 295.0h1V370.1h-1zM543 295.2h1V349.3h-1zM544 296.4h1V370.0h-1zM545 295.4h1V370.0h-1zM546 297.4h1V364.7h-1zM547 297.7h1V349.5h-1zM548 298.3h1V364.3h-1zM549 297.1h1V345.9h-1zM550 295.2h1V361.4h-1zM551 296.1h1V361.0h-1zM552 296.3h1V357.6h-1zM553 297.1h1V358.0h-1zM554 296.0h1V356.9h-1zM555 295.8h1V354.3h-1zM556 296.8h1V354.7h-1zM557 296.0h1V353.4h-1zM558 295.7h1V351.8h-1zM559 298.1h1V340.7h-1zM560 304.1h1V349.2h-1zM561 310.7h1V348.7h-1zM562 313.1h1V348.6h-1zM563 316.0h1V345.1h-1zM564 316.0h1V346.3h-1zM565 317.4h1V337.3h-1zM566 317.6h1V344.7h-1zM567 319.5h1V339.1h-1zM568 320.1h1V344.0h-1zM569 321.4h1V336.5h-1zM570 321.7h1V336.2h-1zM571 322.6h1V342.2h-1zM572 324.1h1V341.0h-1zM573 325.2h1V339.1h-1zM574 325.8h1V338.4h-1zM575 326.9h1V336.4h-1zM576 327.7h1V334.7h-1zM577 327.7h1V332.6h-1zM578 327.7h1V332.8h-1zM579 327.8h1V332.5h-1zM580 328.0h1V332.3h-1zM581 328.0h1V332.6h-1zM582 328.1h1V332.8h-1zM583 327.9h1V332.4h-1zM584 327.9h1V332.6h-1zM585 328.0h1V332.9h-1zM586 327.8h1V332.3h-1zM587 328.1h1V332.9h-1zM588 327.8h1V332.5h-1zM589 327.7h1V332.3h-1zM590 327.6h1V333.0h-1zM591 327.5h1V332.5h-1zM592 327.2h1V333.6h-1zM593 325.2h1V334.2h-1zM594 321.7h1V336.9h-1zM595 318.4h1V339.5h-1zM596 313.8h1V341.9h-1zM597 319.4h1V338.7h-1zM598 311.2h1V347.3h-1zM599 308.7h1V348.5h-1zM600 319.3h1V349.0h-1zM601 307.5h1V340.1h-1zM602 306.2h1V349.6h-1zM603 303.6h1V351.0h-1zM604 305.2h1V352.4h-1zM605 303.8h1V341.9h-1zM606 315.3h1V352.8h-1zM607 302.4h1V354.8h-1zM608 300.6h1V354.1h-1zM609 298.5h1V355.0h-1zM610 300.4h1V355.4h-1zM611 298.1h1V355.7h-1zM612 311.8h1V356.9h-1zM613 297.8h1V346.8h-1zM614 296.8h1V358.0h-1zM615 312.9h1V357.4h-1zM616 295.7h1V358.3h-1zM617 297.7h1V344.4h-1zM618 308.3h1V361.2h-1zM619 296.3h1V360.8h-1zM620 295.5h1V362.3h-1zM621 310.4h1V346.4h-1zM622 294.8h1V361.0h-1zM623 292.9h1V361.5h-1zM624 308.6h1V361.0h-1zM625 292.3h1V363.5h-1zM626 290.4h1V362.0h-1zM627 310.5h1V361.7h-1zM628 289.6h1V362.3h-1zM629 290.9h1V345.3h-1zM630 306.2h1V361.9h-1zM631 289.4h1V362.2h-1zM632 289.4h1V361.7h-1zM633 303.5h1V349.3h-1zM634 291.5h1V363.5h-1zM635 290.0h1V361.8h-1zM636 307.7h1V362.6h-1zM637 289.7h1V347.9h-1zM638 290.7h1V360.2h-1zM639 306.6h1V362.2h-1zM640 290.9h1V360.8h-1zM641 289.4h1V346.3h-1zM642 306.7h1V362.0h-1zM643 288.3h1V360.0h-1zM644 289.5h1V361.9h-1zM645 309.4h1V346.7h-1zM646 288.1h1V359.8h-1zM647 290.6h1V358.8h-1zM648 287.9h1V358.4h-1zM649 289.2h1V358.4h-1zM650 289.5h1V358.0h-1zM651 305.8h1V358.9h-1zM652 291.8h1V356.9h-1zM653 290.8h1V345.5h-1zM654 307.6h1V358.2h-1zM655 289.2h1V357.9h-1zM656 291.4h1V356.3h-1zM657 307.3h1V344.9h-1zM658 291.3h1V357.8h-1zM659 289.8h1V356.3h-1zM660 287.7h1V356.8h-1zM661 287.5h1V343.2h-1zM662 289.6h1V357.3h-1zM663 307.4h1V355.9h-1zM664 287.7h1V355.7h-1zM665 290.4h1V345.6h-1zM666 309.1h1V357.5h-1zM667 289.5h1V355.6h-1zM668 289.9h1V355.5h-1zM669 309.2h1V342.1h-1zM670 289.0h1V355.7h-1zM671 290.0h1V357.3h-1zM672 304.0h1V355.5h-1zM673 289.1h1V343.3h-1zM674 287.2h1V356.7h-1zM675 307.7h1V355.4h-1zM676 290.9h1V355.9h-1zM677 286.8h1V345.9h-1zM678 287.4h1V355.8h-1zM679 288.4h1V356.1h-1zM680 287.9h1V355.8h-1zM681 303.8h1V342.5h-1zM682 288.2h1V355.0h-1zM683 289.5h1V354.8h-1zM684 308.0h1V355.2h-1zM685 286.9h1V345.0h-1zM686 289.3h1V356.3h-1zM687 306.2h1V358.0h-1zM688 290.1h1V356.3h-1zM689 287.2h1V343.8h-1zM690 307.8h1V358.8h-1zM691 288.8h1V356.9h-1zM692 290.9h1V358.6h-1zM693 306.0h1V345.3h-1zM694 289.4h1V357.7h-1zM695 288.1h1V359.3h-1zM696 308.2h1V359.6h-1zM697 290.3h1V345.8h-1zM698 289.8h1V359.3h-1zM699 309.5h1V359.3h-1zM700 290.5h1V357.1h-1zM701 289.7h1V346.5h-1zM702 291.3h1V354.9h-1zM703 292.2h1V355.5h-1zM704 289.1h1V354.5h-1zM705 305.7h1V340.7h-1zM706 289.8h1V353.1h-1zM707 290.9h1V353.4h-1zM708 291.0h1V351.9h-1zM709 292.1h1V350.9h-1zM710 291.5h1V352.7h-1zM711 311.0h1V351.9h-1zM712 291.6h1V352.0h-1zM713 293.1h1V340.5h-1zM714 308.6h1V352.0h-1zM715 292.0h1V350.4h-1zM716 291.7h1V349.7h-1zM717 308.2h1V350.3h-1zM718 294.8h1V350.9h-1zM719 295.2h1V350.7h-1zM720 308.5h1V350.7h-1zM721 295.0h1V340.5h-1zM722 292.8h1V350.1h-1zM723 310.4h1V349.9h-1zM724 293.9h1V349.3h-1zM725 295.9h1V340.9h-1zM726 293.5h1V349.2h-1zM727 294.2h1V348.7h-1zM728 295.7h1V348.4h-1zM729 296.3h1V339.1h-1zM730 294.4h1V349.3h-1zM731 295.4h1V348.5h-1zM732 310.4h1V349.1h-1zM733 297.6h1V348.0h-1zM734 299.1h1V348.1h-1zM735 314.0h1V349.2h-1zM736 299.0h1V348.8h-1zM737 298.5h1V338.4h-1zM738 311.0h1V348.6h-1zM739 299.9h1V348.6h-1zM740 301.5h1V348.6h-1zM741 315.0h1V339.3h-1zM742 301.5h1V348.7h-1zM743 300.4h1V348.4h-1zM744 313.5h1V347.0h-1zM745 302.5h1V340.7h-1zM746 304.2h1V346.7h-1zM747 314.9h1V347.5h-1zM748 304.0h1V346.8h-1zM749 306.0h1V339.5h-1zM750 315.7h1V346.6h-1zM751 306.9h1V346.2h-1zM752 307.1h1V346.5h-1zM753 308.4h1V337.4h-1zM754 310.3h1V346.1h-1zM755 310.7h1V344.6h-1zM756 320.2h1V345.6h-1zM757 311.7h1V338.4h-1zM758 313.5h1V344.7h-1zM759 320.9h1V344.3h-1zM760 313.4h1V345.5h-1zM761 314.4h1V344.7h-1zM762 321.5h1V345.2h-1zM763 315.8h1V345.1h-1zM764 315.9h1V343.9h-1zM765 322.4h1V337.0h-1zM766 317.2h1V344.1h-1zM767 317.8h1V344.0h-1zM768 317.8h1V344.5h-1zM769 319.2h1V337.6h-1zM770 318.8h1V343.4h-1zM771 324.6h1V343.7h-1zM772 319.3h1V344.5h-1zM773 319.7h1V337.4h-1zM774 324.1h1V343.9h-1zM775 319.7h1V343.7h-1zM776 319.6h1V343.5h-1zM777 324.4h1V336.2h-1zM778 320.6h1V343.1h-1zM779 320.3h1V343.0h-1zM780 324.8h1V343.1h-1zM781 320.4h1V336.9h-1zM782 321.2h1V342.1h-1zM783 325.0h1V341.0h-1zM784 321.1h1V341.2h-1zM785 321.9h1V334.7h-1zM786 325.8h1V339.3h-1zM787 321.6h1V339.8h-1zM788 322.3h1V338.5h-1zM789 326.3h1V338.1h-1zM790 322.9h1V336.9h-1zM791 323.2h1V336.8h-1zM792 323.3h1V336.1h-1zM793 323.5h1V335.6h-1zM794 323.7h1V335.0h-1zM795 324.4h1V334.8h-1zM796 324.7h1V334.3h-1zM797 325.6h1V333.6h-1zM798 326.2h1V332.9h-1zM799 326.4h1V333.0h-1zM800 327.6h1V332.0h-1zM801 327.9h1V331.7h-1zM802 328.4h1V331.4h-1zM803 328.8h1V331.4h-1zM804 328.7h1V331.5h-1zM805 328.8h1V331.3h-1zM806 328.6h1V331.4h-1zM807 328.7h1V331.2h-1zM808 328.7h1V331.3h-1zM809 328.5h1V331.4h-1zM810 328.6h1V331.4h-1zM811 328.7h1V331.3h-1zM812 328.6h1V331.4h-1zM813 328.7h1V331.2h-1zM814 328.6h1V331.2h-1zM815 328.8h1V331.2h-1zM816 328.6h1V331.4h-1zM817 328.5h1V331.3h-1zM818 328.7h1V331.5h-1zM819 328.8h1V331.3h-1zM820 328.5h1V331.2h-1zM821 328.8h1V331.2h-1zM822 328.9h1V331.4h-1zM823 328.7h1V331.4h-1zM824 328.6h1V331.1h-1zM825 328.8h1V331.2h-1zM826 328.8h1V331.1h-1zM827 328.8h1V331.3h-1zM828 328.7h1V331.3h-1zM829 328.5h1V331.2h-1zM830 328.8h1V331.5h-1zM831 328.8h1V331.3h-1zM832 328.8h1V331.5h-1z"/><defs><linearGradient id="rg" x1="0" y1="0" x2="0" y2="1"><stop offset="0" stop-color="#f06a30"/><stop offset="0.5" stop-color="#f02a12"/><stop offset="1" stop-color="#e86838"/></linearGradient><linearGradient id="cg" x1="0" y1="0" x2="0" y2="1"><stop offset="0" stop-color="#78bef0"/><stop offset="0.5" stop-color="#6ee6f2"/><stop offset="1" stop-color="#74b8ec"/></linearGradient></defs><rect x="262.5" y="383.5" width="52" height="19" fill="url(#rg)" stroke="#8a4a3c" stroke-width="1"/><rect x="314.5" y="300.5" width="47" height="19" fill="url(#rg)" stroke="#8a4a3c" stroke-width="1"/><rect x="361.5" y="266.5" width="73" height="19" fill="url(#rg)" stroke="#8a4a3c" stroke-width="1"/><rect x="434.5" y="294.5" width="145" height="19" fill="url(#rg)" stroke="#8a4a3c" stroke-width="1"/><rect x="588.5" y="371.5" width="212" height="19" fill="url(#cg)" stroke="#3c4c5a" stroke-width="1"/><g clip-path="url(#nclip)"><path d="M262 340.5 L264 340.5 L265 345 L267 370 L269 385 L271 395 L273 402 L274 406 L276 407 L280 406 L283 404 L286 400 L290 397 L293 398 L297 400 L300 400 L305 396 L308 390 L311 385 L313 372 L314 355 L314.5 335 L315 320 L316 316 L319 314 L322 317 L330 319 L340 320 L345 315 L350 302 L355 283 L358 277 L361 273 L365 271 L368 270 L372 271 L375 273 L378 272 L382 270 L386 271 L390 269 L393 268 L397 269 L400 271 L404 273 L408 275 L412 277 L415 279 L420 282 L425 285 L428 287 L432 289 L437 291 L440 292 L447 293 L455 293 L465 293 L475 293 L480 293.5 L490 295 L497 298 L503 301 L508 300 L513 300.5 L520 301 L528 301 L535 297 L540 294 L545 294 L550 297 L555 301 L558 306 L561 313 L565 330 L569 350 L571 365 L572 372 L574 378 L575 371 L576 378 L577 365 L578 349" fill="none" stroke="#f6b49a" stroke-width="1" stroke-dasharray="1.2 0.8"/><path d="M588.2 389.9 L591.9 386.2 L594.5 382 L596.6 383 L598.2 387.3 L601.4 393 L604.5 389.4 L608.2 383 L613.5 377.3 L619.8 377.8 L626.1 379.4 L630.3 381 L638.7 385.2 L644 384.1 L651.4 386.7 L657.7 386.2 L664 381 L669.3 376.2 L675.6 377.3 L684 378.3 L688.2 376.7 L691.4 372.5 L693.5 371.3 L698.4 372 L702.6 375.7 L705.8 381 L710.5 383.6 L718.4 376.2 L723.7 377.3 L730 379.4 L735.3 380.4 L739.5 385.2 L744.7 390.4 L749 389.9 L754.2 384.6 L759.5 380.4 L763.7 382 L770 377.8 L774.2 374.1 L779.5 372 L783.7 373.6 L789 378.3 L792.6 379.4 L796.3 386.2 L799.5 392.5" fill="none" stroke="#5f8494" stroke-width="0.9"/></g></svg>
<svg class="a" style="left:0;top:0" width="860" height="450"><rect x="133" y="220" width="47" height="220" fill="#fff"/><rect x="133" y="227" width="30" height="20" fill="#000"/><rect x="133" y="287" width="30" height="20" fill="#000"/><rect x="133" y="327" width="30" height="20" fill="#000"/><rect x="133" y="387" width="30" height="20" fill="#000"/><rect x="133" y="427" width="30" height="20" fill="#000"/><rect x="163" y="232" width="17" height="1" fill="#000"/><rect x="133" y="267" width="47" height="1" fill="#000"/><rect x="163" y="301" width="17" height="1" fill="#000"/><rect x="163" y="334" width="17" height="1" fill="#000"/><rect x="133" y="367" width="47" height="1" fill="#000"/><rect x="163" y="402" width="17" height="1" fill="#000"/><rect x="163" y="434" width="17" height="1" fill="#000"/><rect x="131" y="220" width="2" height="220" fill="#1a1a1a"/><rect x="180" y="220" width="1" height="220" fill="#000"/><text x="175" y="261" text-anchor="end" font-size="10" fill="#000" font-family="Liberation Sans">F4</text><text x="175" y="281" text-anchor="end" font-size="10" fill="#000" font-family="Liberation Sans">E4</text><text x="175" y="321" text-anchor="end" font-size="10" fill="#000" font-family="Liberation Sans">D4</text><text x="175" y="361" text-anchor="end" font-size="10" fill="#000" font-family="Liberation Sans">C4</text><text x="175" y="381" text-anchor="end" font-size="10" fill="#000" font-family="Liberation Sans">B3</text></svg>
<div class="a " style="left:833px;top:190px;width:1px;height:250px;background:#7a828a"></div>
<div class="a " style="left:834px;top:190px;width:16px;height:250px;background:#3d4650"></div>
<div class="a " style="left:834px;top:208px;width:16px;height:75px;background:#22262d"></div>
<div class="a " style="left:834px;top:283px;width:16px;height:17px;background:#67737f"></div>
<div class="a " style="left:834px;top:300px;width:16px;height:70px;background:#22262d"></div>
<svg class="a" style="left:0;top:0" width="860" height="460"><path d="M838 202 L842 198 L846 202" fill="none" stroke="#c8d0d8" stroke-width="2"/><path d="M838 376 L842 380 L846 376" fill="none" stroke="#c8d0d8" stroke-width="2"/><rect x="840" y="394" width="1" height="40" fill="#8a949e"/><rect x="843" y="394" width="1" height="40" fill="#8a949e"/><rect x="835" y="398" width="14" height="8" fill="#6a7480" stroke="#aab2ba" stroke-width="1"/><rect x="837" y="401" width="10" height="1" fill="#c0c6cc"/><rect x="837" y="403" width="10" height="1" fill="#c0c6cc"/></svg>
<div class="a " style="left:131px;top:440px;width:720px;height:16px;background:#22262d"></div>
<div class="a " style="left:695px;top:440px;width:17px;height:16px;background:#67737f"></div>
<div class="a " style="left:748px;top:440px;width:102px;height:16px;background:#3d4650"></div>
<svg class="a" style="left:0;top:0" width="860" height="470"><path d="M753 444 L757 448 L753 452" fill="none" stroke="#d8dde2" stroke-width="2"/><rect x="770" y="446" width="58" height="1" fill="#8a949e"/><rect x="770" y="449" width="58" height="1" fill="#8a949e"/><rect x="791" y="440" width="7" height="15" fill="#6a7480" stroke="#aab2ba" stroke-width="1"/></svg>
<div class="a " style="left:131px;top:455px;width:720px;height:1px;background:#4a4e54"></div>
<svg class="a" style="left:0;top:0" width="700" height="480"><text x="773.08 782.69 789.10 800.64 809.62 821.79 831.41 839.74 846.79 857.05" y="471.5" font-size="12.5" fill="#e8e8e8" font-family="Liberation Sans" transform="scale(0.78,1)">-19:4:128]</text></svg>
<div class="a " style="left:850px;top:66px;width:2px;height:412px;background:#1a1d22"></div>
<div class="a " style="left:852px;top:66px;width:4px;height:412px;background:#e9eef3"></div>
<div class="a " style="left:856px;top:66px;width:266px;height:18px;background:#4b5663"></div>
<div class="a t sh" style="left:858.52px;top:68.50px;font-size:13px;color:#d8e0e8;font-family:'Liberation Sans',sans-serif;transform-origin:0 0;transform:scaleX(0.7391)">ピッチタイムエディット</div>
<svg class="a" style="left:1088px;top:70px" width="34" height="12"><path d="M5 1 L10 1 L10 2 L9 2 L9 6 L11 6 L11 7 L4 7 L4 6 L6 6 L6 2 L5 2 Z M7 7 L8 7 L8 11 L7 11 Z" fill="#fff"/><path d="M20 2 L27 9 M27 2 L20 9" stroke="#fff" stroke-width="1.6"/></svg>
<div class="a " style="left:856px;top:84px;width:266px;height:2px;background:#f2f4f6"></div>
<div class="a " style="left:856px;top:86px;width:266px;height:392px;background:#1a1d21"></div>
<div class="a " style="left:856px;top:226px;width:266px;height:1px;background:#8a8e92"></div>
<div class="a " style="left:856px;top:302px;width:266px;height:1px;background:#8a8e92"></div>
<div class="a " style="left:856px;top:378px;width:266px;height:1px;background:#8a8e92"></div>
<div class="a t sh" style="left:858.94px;top:97.00px;font-size:11px;color:#fff;font-family:'Liberation Sans',sans-serif;transform-origin:0 0;transform:scaleX(1.0312)">ピッチの矯正</div>
<div class="a t sh" style="left:966.14px;top:96.50px;font-size:11px;color:#fff;font-family:'Liberation Sans',sans-serif;transform-origin:0 0;transform:scaleX(0.9278)">ピッチクォンタイズ</div>
<div class="a sld" style="left:862px;top:112px;width:92px;height:12px;"></div>
<div class="a " style="left:862px;top:112px;width:5px;height:12px;background:linear-gradient(#f0f2f4,#c4c8cc);border-top:1px solid #fff"></div>
<div class="a sld" style="left:968px;top:112px;width:92px;height:12px;"></div>
<div class="a " style="left:968px;top:112px;width:5px;height:12px;background:linear-gradient(#f0f2f4,#c4c8cc);border-top:1px solid #fff"></div>
<div class="a pbtn" style="left:869px;top:129px;width:78px;height:17px;"></div>
<div class="a t" style="left:906.00px;top:131.50px;font-size:12px;color:#111;font-family:'Liberation Sans',sans-serif;transform-origin:0 0;transform:scaleX(0.5714)">0</div>
<div class="a pbtn" style="left:975px;top:129px;width:78px;height:17px;"></div>
<div class="a t" style="left:1012.00px;top:131.50px;font-size:12px;color:#111;font-family:'Liberation Sans',sans-serif;transform-origin:0 0;transform:scaleX(0.5714)">0</div>
<div class="a " style="left:1074px;top:88px;width:42px;height:21px;background:#e1e1e1;border:1px solid #fff;outline:1px solid #9a9a9a;outline-offset:-2px"></div>
<div class="a t" style="left:1083.00px;top:91.50px;font-size:12px;color:#000;font-family:'Liberation Sans',sans-serif;transform-origin:0 0;transform:scaleX(1.0000)">適用</div>
<div class="a t sh" style="left:861.08px;top:161.00px;font-size:11px;color:#fff;font-family:'Liberation Sans',sans-serif;transform-origin:0 0;transform:scaleX(0.9167)">フォルマントシフト</div>
<div class="a sld" style="left:862px;top:176px;width:92px;height:12px;"></div>
<div class="a " style="left:863px;top:177px;width:42px;height:10px;background:repeating-linear-gradient(90deg,#1f7a9c 0 1px,#3aa6cc 1px 2px)"></div>
<div class="a " style="left:905px;top:176px;width:5px;height:12px;background:linear-gradient(#f0f2f4,#c4c8cc);border-top:1px solid #fff"></div>
<div class="a pbtn" style="left:869px;top:193px;width:78px;height:17px;"></div>
<div class="a t" style="left:906.00px;top:195.50px;font-size:12px;color:#111;font-family:'Liberation Sans',sans-serif;transform-origin:0 0;transform:scaleX(0.5714)">0</div>
<div class="a t sh" style="left:966.12px;top:236.00px;font-size:11px;color:#fff;font-family:'Liberation Sans',sans-serif;transform-origin:0 0;transform:scaleX(0.9381)">タイムクォンタイズ</div>
<div class="a sld" style="left:968px;top:252px;width:92px;height:12px;"></div>
<div class="a " style="left:968px;top:252px;width:5px;height:12px;background:linear-gradient(#f0f2f4,#c4c8cc);border-top:1px solid #fff"></div>
<div class="a t sh" style="left:861.05px;top:254.00px;font-size:11px;color:#fff;font-family:'Liberation Sans',sans-serif;transform-origin:0 0;transform:scaleX(0.9474)">グリッドの種類</div>
<div class="a pbtn" style="left:869px;top:269px;width:78px;height:17px;"></div>
<div class="a t" style="left:880.00px;top:271.50px;font-size:11.5px;color:#111;font-family:'Liberation Sans',sans-serif;transform-origin:0 0;transform:scaleX(0.8308)">8分グリッド</div>
<div class="a pbtn" style="left:975px;top:269px;width:78px;height:17px;"></div>
<div class="a t" style="left:1012.00px;top:271.50px;font-size:12px;color:#111;font-family:'Liberation Sans',sans-serif;transform-origin:0 0;transform:scaleX(0.5714)">0</div>
<div class="a t sh" style="left:861.06px;top:319.00px;font-size:11px;color:#fff;font-family:'Liberation Sans',sans-serif;transform-origin:0 0;transform:scaleX(0.9394)">フェードイン/アウト</div>
<div class="a t sh" style="left:862.00px;top:331.00px;font-size:11px;color:#fff;font-family:'Liberation Sans',sans-serif;transform-origin:0 0;transform:scaleX(1.0303)">する時間(ms)</div>
<div class="a pbtn" style="left:869px;top:345px;width:78px;height:17px;"></div>
<div class="a t" style="left:903.00px;top:347.50px;font-size:12px;color:#111;font-family:'Liberation Sans',sans-serif;transform-origin:0 0;transform:scaleX(0.8462)">30</div>
<div class="a t sh" style="left:967.09px;top:323.50px;font-size:11px;color:#fff;font-family:'Liberation Sans',sans-serif;transform-origin:0 0;transform:scaleX(0.9062)">フェードイン</div>
<div class="a t sh" style="left:967.09px;top:349.50px;font-size:11px;color:#fff;font-family:'Liberation Sans',sans-serif;transform-origin:0 0;transform:scaleX(0.9054)">フェードアウト</div>
<div class="a pbtn" style="left:1047px;top:320px;width:58px;height:16px;"></div>
<div class="a t" style="left:1064.00px;top:322.00px;font-size:12px;color:#111;font-family:'Liberation Sans',sans-serif;transform-origin:0 0;transform:scaleX(0.9583)">直線</div>
<div class="a pbtn" style="left:1047px;top:345px;width:58px;height:16px;"></div>
<div class="a t" style="left:1064.00px;top:347.00px;font-size:12px;color:#111;font-family:'Liberation Sans',sans-serif;transform-origin:0 0;transform:scaleX(0.9583)">直線</div>
<div class="a " style="left:868px;top:396px;width:13px;height:13px;background:#fff;border:1px solid #ccc"></div>
<div class="a t sh" style="left:883.00px;top:396.00px;font-size:11px;color:#fff;font-family:'Liberation Sans',sans-serif;transform-origin:0 0;transform:scaleX(1.0000)">スムージング</div>
<div class="a t sh" style="left:966.97px;top:395.00px;font-size:11px;color:#fff;font-family:'Liberation Sans',sans-serif;transform-origin:0 0;transform:scaleX(1.0349)">スムージングする</div>
<div class="a t sh" style="left:968.00px;top:407.00px;font-size:11px;color:#fff;font-family:'Liberation Sans',sans-serif;transform-origin:0 0;transform:scaleX(1.0606)">最大範囲(ms)</div>
<div class="a pbtn" style="left:975px;top:421px;width:78px;height:17px;"></div>
<div class="a t" style="left:1009.00px;top:423.00px;font-size:12px;color:#111;font-family:'Liberation Sans',sans-serif;transform-origin:0 0;transform:scaleX(0.7692)">50</div>
<div class="a t sh" style="left:860.11px;top:451.50px;font-size:11px;color:#fff;font-family:'Liberation Sans',sans-serif;transform-origin:0 0;transform:scaleX(0.9457)">タイムストレッチのモード</div>
<div class="a pbtn" style="left:995px;top:447px;width:58px;height:17px;"></div>
<div class="a t" style="left:1004.12px;top:449.50px;font-size:11.5px;color:#111;font-family:'Liberation Sans',sans-serif;transform-origin:0 0;transform:scaleX(0.8780)">モード1</div>
<div class="a " style="left:6px;top:407px;width:597px;height:386px;box-shadow:0 0 10px 3px rgba(10,12,16,0.45)"></div>
<div class="a " style="left:6px;top:407px;width:597px;height:386px;background:#23272e;border:1px solid #5a5e64"></div>
<div class="a " style="left:7px;top:408px;width:595px;height:30px;background:#4a4644"></div>
<svg class="a" style="left:16px;top:415px" width="19" height="17" viewBox="0 0 19 17"><defs><linearGradient id="lgb" x1="0" y1="0" x2="1" y2="0.3"><stop offset="0" stop-color="#8a0c10"/><stop offset="0.55" stop-color="#e02418"/><stop offset="1" stop-color="#f07060"/></linearGradient></defs><path d="M7.2 1.4 L14.8 13.2 L0.6 13.2 Z" fill="url(#lgb)" stroke="url(#lgb)" stroke-width="1.6" stroke-linejoin="round"/><path d="M7.4 5.2 L12.2 11.4 L3.8 11.4 Z" fill="#f6dcd4"/><path d="M3.6 11.2 L14.6 11.2 L15.2 13 L4.4 13 Z" fill="#f4c8bc" opacity="0.85"/><path d="M1 14 L14.5 14" stroke="#6a0c0c" stroke-width="1" opacity="0.55"/></svg>
<div class="a t sh" style="left:34.53px;top:416.50px;font-size:12.5px;color:#f0f0f0;font-family:'Liberation Sans',sans-serif;transform-origin:0 0;transform:scaleX(0.7327)">ビブラートの設定</div>
<svg class="a" style="left:580px;top:415px" width="14" height="14"><path d="M2 2 L12 12 M12 2 L2 12" stroke="#fff" stroke-width="1.3"/></svg>
<div class="a t" style="left:19.00px;top:452.00px;font-size:12px;color:#fff;font-family:'Liberation Sans',sans-serif;transform-origin:0 0;transform:scaleX(0.8095)">長さ(%)</div>
<div class="a t" style="left:61.50px;top:453.00px;font-size:12px;color:#fff;font-family:'Liberation Sans',sans-serif;transform-origin:0 0;transform:scaleX(1.5000)">:</div>
<div class="a " style="left:93px;top:449px;width:53px;height:21px;background:#fff;border:1px solid #1c5a98"></div>
<div class="a " style="left:131px;top:452px;width:12px;height:12px;background:#0a64c8"></div>
<svg class="a" style="left:0;top:0" width="200" height="480"><text x="169.2 176.9" y="463" font-size="12.5" fill="#fff" font-family="Liberation Sans" transform="scale(0.78,1)">66</text><rect x="143" y="452" width="1" height="12" fill="#222"/></svg>
<div class="a " style="left:146px;top:449px;width:17px;height:21px;background:#dcdcdc;border:1px solid #bbb"></div>
<svg class="a" style="left:146px;top:449px" width="17" height="21"><rect x="2" y="2" width="13" height="7" fill="#e8e8e8" stroke="#c8c8c8"/><rect x="2" y="11" width="13" height="7" fill="#e8e8e8" stroke="#c8c8c8"/><path d="M5 7 L8.5 4 L12 7 Z M5 13 L12 13 L8.5 16 Z" fill="#000"/></svg>
<div class="a t" style="left:198.00px;top:452.50px;font-size:12px;color:#fff;font-family:'Liberation Sans',sans-serif;transform-origin:0 0;transform:scaleX(1.0000)">種類</div>
<div class="a t" style="left:225.50px;top:453.00px;font-size:12px;color:#fff;font-family:'Liberation Sans',sans-serif;transform-origin:0 0;transform:scaleX(1.5000)">:</div>
<div class="a " style="left:252px;top:449px;width:125px;height:20px;background:#fff"></div>
<div class="a t" style="left:254.97px;top:452.50px;font-size:11.5px;color:#000;font-family:'Liberation Sans',sans-serif;transform-origin:0 0;transform:scaleX(1.0323)">In-Out</div>
<svg class="a" style="left:363px;top:455px" width="12" height="8"><path d="M1 1 L5 5 L9 1" fill="none" stroke="#333" stroke-width="1.2"/></svg>
<div class="a dbtn" style="left:388px;top:450px;width:52px;height:19px;"></div>
<div class="a t" style="left:402.00px;top:452.50px;font-size:12px;color:#fff;font-family:'Liberation Sans',sans-serif;transform-origin:0 0;transform:scaleX(0.9583)">保存</div>
<div class="a dbtn" style="left:447px;top:450px;width:52px;height:19px;"></div>
<div class="a t" style="left:460.00px;top:452.50px;font-size:12px;color:#8a9096;font-family:'Liberation Sans',sans-serif;transform-origin:0 0;transform:scaleX(1.0435)">削除</div>
<div class="a dbtn" style="left:537px;top:450px;width:52px;height:19px;"></div>
<div class="a t" style="left:550.00px;top:452.50px;font-size:12px;color:#fff;font-family:'Liberation Sans',sans-serif;transform-origin:0 0;transform:scaleX(1.0000)">試聴</div>
<svg class="a" style="left:0;top:0" width="610" height="800"><rect x="19" y="482" width="571" height="255" fill="#47505a"/><rect x="57" y="504" width="500" height="93" fill="#454d56"/><rect x="57" y="622" width="500" height="93" fill="#454d56"/><rect x="557" y="500" width="32" height="218" fill="#636363"/><path d="M57 551 L420 551 L445 548.5 L556 548 L556 597 L57 597 Z" fill="#4f5a7c"/><path d="M57 677 L120 670 L230 657 L460 657 L556 679 L556 715 L57 715 Z" fill="#4f5a7c"/><rect x="19" y="482" width="571" height="1" fill="#b4b8bc"/><rect x="19" y="736" width="571" height="1" fill="#b4b8bc"/><rect x="19" y="482" width="1" height="255" fill="#b4b8bc"/><rect x="589" y="482" width="1" height="255" fill="#b4b8bc"/><rect x="51" y="482" width="1" height="255" fill="#b4b8bc"/><rect x="52" y="499" width="538" height="1" fill="#b4b8bc"/><rect x="52" y="503" width="505" height="1" fill="#b4b8bc"/><rect x="52" y="550" width="505" height="1" fill="#b4b8bc"/><rect x="52" y="597" width="505" height="1" fill="#b4b8bc"/><rect x="52" y="600" width="538" height="1" fill="#b4b8bc"/><rect x="52" y="617" width="538" height="1" fill="#b4b8bc"/><rect x="52" y="621" width="505" height="1" fill="#b4b8bc"/><rect x="52" y="668" width="505" height="1" fill="#b4b8bc"/><rect x="52" y="715" width="505" height="1" fill="#b4b8bc"/><rect x="52" y="718" width="538" height="2" fill="#b4b8bc"/><rect x="56" y="482" width="1" height="236" fill="#b4b8bc"/><rect x="156" y="482" width="1" height="236" fill="#b4b8bc"/><rect x="256" y="482" width="1" height="236" fill="#b4b8bc"/><rect x="356" y="482" width="1" height="236" fill="#b4b8bc"/><rect x="456" y="482" width="1" height="236" fill="#b4b8bc"/><rect x="556" y="482" width="1" height="236" fill="#b4b8bc"/><rect x="52" y="720" width="537" height="16" fill="#47505a"/><rect x="52" y="720" width="17" height="16" fill="#3d4650"/><rect x="69" y="720" width="17" height="16" fill="#67737f"/><path d="M64 724 L60 728 L64 732" fill="none" stroke="#d8dde2" stroke-width="2"/><path d="M510 724 L514 728 L510 732" fill="none" stroke="#d8dde2" stroke-width="2"/><rect x="527" y="726" width="56" height="1" fill="#8a949e"/><rect x="527" y="728" width="56" height="1" fill="#8a949e"/><rect x="531.5" y="720.5" width="7" height="15" fill="#6a7480" stroke="#aab2ba" stroke-width="1"/><text x="90.62" y="495" transform="scale(0.64,1)" font-size="12.5" fill="#cdd2d6" font-family="Liberation Sans" textLength="29.69" lengthAdjust="spacing">0(%)</text><text x="248.44" y="495" transform="scale(0.64,1)" font-size="12.5" fill="#cdd2d6" font-family="Liberation Sans" textLength="15.62" lengthAdjust="spacing">20</text><text x="404.69" y="495" transform="scale(0.64,1)" font-size="12.5" fill="#cdd2d6" font-family="Liberation Sans" textLength="15.62" lengthAdjust="spacing">40</text><text x="560.94" y="495" transform="scale(0.64,1)" font-size="12.5" fill="#cdd2d6" font-family="Liberation Sans" textLength="15.62" lengthAdjust="spacing">60</text><text x="717.19" y="495" transform="scale(0.64,1)" font-size="12.5" fill="#cdd2d6" font-family="Liberation Sans" textLength="15.62" lengthAdjust="spacing">80</text><text x="873.44" y="495" transform="scale(0.64,1)" font-size="12.5" fill="#cdd2d6" font-family="Liberation Sans" textLength="24.22" lengthAdjust="spacing">100</text><text x="90.62" y="614" transform="scale(0.64,1)" font-size="12.5" fill="#cdd2d6" font-family="Liberation Sans" textLength="29.69" lengthAdjust="spacing">0(%)</text><text x="248.44" y="614" transform="scale(0.64,1)" font-size="12.5" fill="#cdd2d6" font-family="Liberation Sans" textLength="15.62" lengthAdjust="spacing">20</text><text x="404.69" y="614" transform="scale(0.64,1)" font-size="12.5" fill="#cdd2d6" font-family="Liberation Sans" textLength="15.62" lengthAdjust="spacing">40</text><text x="560.94" y="614" transform="scale(0.64,1)" font-size="12.5" fill="#cdd2d6" font-family="Liberation Sans" textLength="15.62" lengthAdjust="spacing">60</text><text x="717.19" y="614" transform="scale(0.64,1)" font-size="12.5" fill="#cdd2d6" font-family="Liberation Sans" textLength="15.62" lengthAdjust="spacing">80</text><text x="873.44" y="614" transform="scale(0.64,1)" font-size="12.5" fill="#cdd2d6" font-family="Liberation Sans" textLength="24.22" lengthAdjust="spacing">100</text><text x="52.34" y="509" transform="scale(0.64,1)" font-size="12.5" fill="#cdd2d6" font-family="Liberation Sans" textLength="24.22" lengthAdjust="spacing">200</text><text x="52.34" y="554" transform="scale(0.64,1)" font-size="12.5" fill="#cdd2d6" font-family="Liberation Sans" textLength="24.22" lengthAdjust="spacing">100</text><text x="69.53" y="599" transform="scale(0.64,1)" font-size="12.5" fill="#cdd2d6" font-family="Liberation Sans" textLength="7.03" lengthAdjust="spacing">0</text><text x="60.94" y="627" transform="scale(0.64,1)" font-size="12.5" fill="#cdd2d6" font-family="Liberation Sans" textLength="15.62" lengthAdjust="spacing">10</text><text x="69.53" y="673" transform="scale(0.64,1)" font-size="12.5" fill="#cdd2d6" font-family="Liberation Sans" textLength="7.03" lengthAdjust="spacing">5</text><text x="69.53" y="720" transform="scale(0.64,1)" font-size="12.5" fill="#cdd2d6" font-family="Liberation Sans" textLength="7.03" lengthAdjust="spacing">0</text></svg>
<div class="a t" style="left:25.00px;top:485.50px;font-size:11.5px;color:#cdd2d6;font-family:'Liberation Sans',sans-serif;transform-origin:0 0;transform:scaleX(1.0000)">振幅</div>
<div class="a t" style="left:25.00px;top:603.50px;font-size:11.5px;color:#cdd2d6;font-family:'Liberation Sans',sans-serif;transform-origin:0 0;transform:scaleX(1.0000)">周期</div>
<div class="a " style="left:408px;top:761px;width:88px;height:21px;background:#2a74f0"></div>
<div class="a t" style="left:443.00px;top:765.00px;font-size:12px;color:#fff;font-family:'Liberation Sans',sans-serif;transform-origin:0 0;transform:scaleX(0.8824)">OK</div>
<div class="a dbtn" style="left:503px;top:762px;width:86px;height:19px;"></div>
<div class="a t" style="left:517.08px;top:764.00px;font-size:12px;color:#fff;font-family:'Liberation Sans',sans-serif;transform-origin:0 0;transform:scaleX(0.9153)">キャンセル</div></div></body></html>
